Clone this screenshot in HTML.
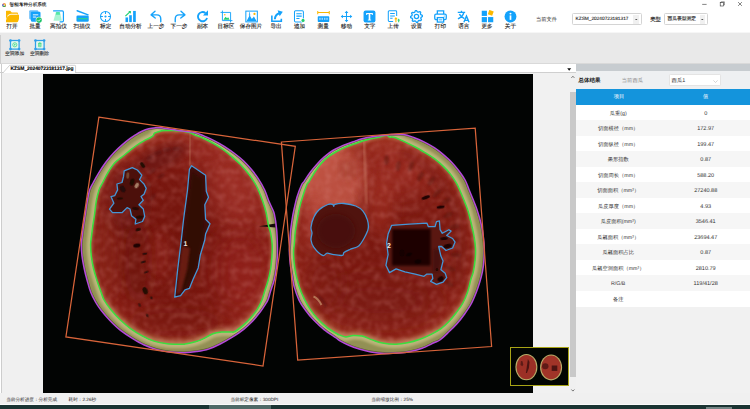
<!DOCTYPE html>
<html lang="zh"><head><meta charset="utf-8"><title>智能考种分析系统</title>
<style>
*{margin:0;padding:0;box-sizing:border-box}
html,body{width:750px;height:409px;overflow:hidden;background:#f0f0f0;text-rendering:geometricPrecision;font-family:"Liberation Sans",sans-serif;color:#222}
#app{position:relative;width:750px;height:409px;overflow:hidden;background:#f0f0f0}
.abs{position:absolute}
#title{left:0;top:0;width:750px;height:9.5px;background:#fff}
#title .t{position:absolute;left:9.6px;top:2.1px;font-size:4.62px;line-height:6px;color:#111;white-space:nowrap;-webkit-text-stroke:0.1px #111}
#toolbar{left:0;top:9.5px;width:750px;height:22.7px;background:#fff}
.tool{position:absolute;top:0.4px;width:30px;height:21px;text-align:center}
.tool svg{display:block;margin:0 auto}
.tool span{display:block;font-size:5.6px;line-height:7px;margin-top:1px;color:#222;-webkit-text-stroke:0.12px #222;white-space:nowrap;letter-spacing:0}
#band{left:0;top:32px;width:750px;height:31.6px;background:#e9e9e9;border-top:1px solid #f6f6f6;border-bottom:0.6px solid #d9d9d9}
.tool2{position:absolute;top:6.1px;width:30px;text-align:center}
.tool2 svg{display:block;margin:0 auto}
.tool2 span{display:block;font-size:4.8px;line-height:6px;margin-top:0.9px;color:#333;white-space:nowrap;-webkit-text-stroke:0.1px #333}
#tabrow{left:0;top:63.6px;width:575.8px;height:9.6px;background:#fff;border-bottom:0.5px solid #cfcfcf}
#tabtxt{position:absolute;left:10.6px;top:3.6px;font-size:4.95px;line-height:6px;font-weight:bold;color:#000;white-space:nowrap;letter-spacing:-0.05px;-webkit-text-stroke:0.1px #000}
#canvasleft{left:0;top:73.2px;width:42.6px;height:320.2px;background:#f0f0f0;border-left:0.5px solid #fff}
#canvasleft:before{content:"";position:absolute;left:0.4px;top:-9px;width:0.6px;height:330px;background:#cdcdcd}
#cv{left:42.6px;top:73.6px;width:490.4px;height:319.8px;background:#020403;overflow:hidden}
#gap{left:533px;top:73.2px;width:36.6px;height:320.2px;background:#f1f1f1}
#sb{left:569.8px;top:73.2px;width:6.2px;height:320.2px;background:#f0f0f0}
#sbthumb{left:569.8px;top:92.2px;width:6.2px;height:285.2px;background:#c9c9c9}
#rp{left:576px;top:63.6px;width:174px;height:330px;background:#f1f1f1}
#rpstrip{left:0;top:0;width:100%;height:7.4px;background:#c7ccd0}
#rphead{left:0;top:7.4px;width:100%;height:18.2px;background:#eef0f2}
#rpblue{left:0;top:25.5px;width:100%;height:15.5px;background:#1494dc;color:#fff;font-size:5.25px;line-height:15.5px}
#rpblue .c1,#rpblue .c2{top:0.7px;font-size:5.25px}
#rows{left:0;top:41px;width:100%}
.row{position:relative;height:15.546px;background:#fff;font-size:5.25px;line-height:15.546px;color:#333}
.row.alt{background:#f6f6f6}
.c1,.c2{position:absolute;top:2px;text-align:center;white-space:nowrap}
.c1{left:0;width:86px}
.row .c1{left:-0.8px}
.c2{left:86px;width:87.4px;font-size:5.55px}
#status{left:0;top:393.4px;width:750px;height:11px;background:#f0f0f0;font-size:4.64px;line-height:6px;color:#1a1a1a}
#status span{position:absolute;top:3.6px;white-space:nowrap}
#taskbar{left:0;top:404.3px;width:750px;height:4.7px;background:#1b3433;border-top:1.2px solid #fbfbfb}
.combo{position:absolute;top:13px;height:12.2px;background:#fff;border:0.6px solid #d4d4d4;border-radius:1.4px;font-size:4.75px;line-height:11.6px;-webkit-text-stroke:0.1px #222;color:#222;white-space:nowrap}
.combo .btn{position:absolute;right:1.6px;top:1.2px;width:5.6px;height:8.8px;background:#f0f0f0}

</style></head><body><div id="app">
<div id="title" class="abs"><svg class="abs" style="left:2px;top:2.6px" width="4.3" height="4.3" viewBox="0 0 6 6"><circle cx="3" cy="3" r="2.6" fill="#e8483a"/><path d="M3,3 L3,0.4 A2.6,2.6 0 0 1 5.4,4Z" fill="#f2c230"/><path d="M3,3 L5.4,4 A2.6,2.6 0 0 1 1,4.8Z" fill="#37b24d"/><path d="M3,3 L1,4.8 A2.6,2.6 0 0 1 1,1.4Z" fill="#3b7de0"/><circle cx="3" cy="3" r="1" fill="#fff"/></svg><span class="t">智能考种分析系统</span>
<svg class="abs" style="left:700px;top:0" width="50" height="9" viewBox="0 0 50 9"><path d="M2.2,4.4H6.6" stroke="#333" stroke-width="0.6"/><rect x="20.2" y="2.6" width="3.4" height="3.4" fill="none" stroke="#333" stroke-width="0.6"/><path d="M21.2,2.6V1.8H24.4V5H23.6" fill="none" stroke="#333" stroke-width="0.5"/><path d="M38.1,2.1L41.9,5.9M41.9,2.1L38.1,5.9" stroke="#333" stroke-width="0.6"/></svg>
</div>
<div id="toolbar" class="abs">
<div class="tool" style="left:-3.0px"><svg width="13" height="13" viewBox="0 0 14 14"><g transform="translate(-1.2,-0.2) scale(1.09,1.04)"><path d="M0.5,2.2 Q0.5,1 1.7,1 H5.2 L6.8,2.8 H12 Q13,2.8 13,3.8 V5 H3 L0.5,11.5Z" fill="#fbb800"/><path d="M3.2,5.2 H14.6 Q15.4,5.2 15.1,6 L13,12.2 Q12.7,13 11.8,13 H1.2 Q0.3,13 0.6,12.2Z" fill="#fbb800"/><path d="M3.3,6.6 Q3.8,4.6 6,4.6 H12.5" fill="none" stroke="#fff" stroke-width="0.9"/></g></svg><span>打开</span></div>
<div class="tool" style="left:20.0px"><svg width="13" height="13" viewBox="0 0 14 14"><rect x="0.2" y="0.2" width="9.8" height="10" rx="1.2" fill="#6cc0fb"/><rect x="2" y="2" width="10.4" height="10.6" rx="1.2" fill="#14a2fb"/><path d="M4.2,5.2H10M4.2,7.6H7.6" stroke="#fff" stroke-width="1"/><circle cx="10.8" cy="10.9" r="3.6" fill="#fff"/><circle cx="10.8" cy="10.9" r="3" fill="#1fc46a"/><path d="M9.3,10.9l1.1,1.1l2,-2.1" stroke="#fff" stroke-width="0.8" fill="none"/></svg><span>批量</span></div>
<div class="tool" style="left:43.5px"><svg width="13" height="13" viewBox="0 0 14 14"><path d="M1.2,1 H11 Q12.3,1 12.3,2.3 V11.7 Q12.3,12.8 11,12.8 H8.2" fill="none" stroke="#14a2fb" stroke-width="1.3"/><path d="M4.2,2.2 H8.6 L10.6,11.6 H1.6Z" fill="#8ef0c4" opacity="0.75"/><path d="M4.6,2.2H8.2L8.8,5H4Z" fill="#3fe39a" opacity="0.8"/></svg><span>高拍仪</span></div>
<div class="tool" style="left:67.0px"><svg width="13" height="13" viewBox="0 0 14 14"><path d="M1.2,0.8 L13,5.2" stroke="#14a2fb" stroke-width="1.5" stroke-linecap="round"/><rect x="0.5" y="6" width="13.2" height="6.7" rx="1.4" fill="#14a2fb"/><path d="M2.4,9.4H12" stroke="#31e07a" stroke-width="1.3" stroke-linecap="round"/></svg><span>扫描仪</span></div>
<div class="tool" style="left:90.7px"><svg width="13" height="13" viewBox="0 0 14 14"><circle cx="7" cy="7" r="5.4" fill="none" stroke="#14a2fb" stroke-width="1.1"/><circle cx="7" cy="7" r="1.2" fill="#14a2fb"/><path d="M7,1.6V4.2M7,9.8V12.4M1.6,7H4.2M9.8,7H12.4" stroke="#14a2fb" stroke-width="1.1"/></svg><span>标定</span></div>
<div class="tool" style="left:115.5px"><svg width="13" height="13" viewBox="0 0 14 14"><rect x="1.6" y="8" width="2.8" height="5" fill="#14a2fb"/><rect x="5.6" y="5.6" width="2.8" height="7.4" fill="#14a2fb"/><rect x="9.8" y="1" width="2.9" height="12" fill="#14a2fb"/><path d="M1.5,6.6 L6.6,1.8" stroke="#1fd071" stroke-width="1.3"/><path d="M4.6,1.2H7.4V4Z" fill="#1fd071"/></svg><span>自动分析</span></div>
<div class="tool" style="left:141.0px"><svg width="13" height="13" viewBox="0 0 14 14"><path d="M1.2,5.2 L5.4,1.3 M1.2,5.2 L5.6,8.6 M1.6,5.2 H7.4 Q11.6,5.2 11.6,9.6 V12.6" fill="none" stroke="#14a2fb" stroke-width="1.5" stroke-linecap="round" stroke-linejoin="round"/></svg><span>上一步</span></div>
<div class="tool" style="left:164.0px"><svg width="13" height="13" viewBox="0 0 14 14"><path d="M12.8,5.2 L8.6,1.3 M12.8,5.2 L8.4,8.6 M12.4,5.2 H6.6 Q2.4,5.2 2.4,9.6 V12.6" fill="none" stroke="#14a2fb" stroke-width="1.5" stroke-linecap="round" stroke-linejoin="round"/></svg><span>下一步</span></div>
<div class="tool" style="left:187.6px"><svg width="13" height="13" viewBox="0 0 14 14"><path d="M11.9,8.6 A5,5 0 1 1 10.2,3.2" fill="none" stroke="#14a2fb" stroke-width="2"/><path d="M12.9,0.4 V5.8 H7.5Z" fill="#14a2fb"/></svg><span>副本</span></div>
<div class="tool" style="left:211.0px"><svg width="13" height="13" viewBox="0 0 14 14"><path d="M2.6,0.6V11.4H13.4M0.6,2.6H11.4V13.4" fill="none" stroke="#14a2fb" stroke-width="1"/><path d="M3.6,10.4 L6,7.2 L7.6,9 L8.8,7.8 L10.4,10.4Z" fill="#22cf6e"/><circle cx="5.2" cy="5.2" r="0.8" fill="#fbb800"/></svg><span>目标区</span></div>
<div class="tool" style="left:236.0px"><svg width="13" height="13" viewBox="0 0 14 14"><rect x="0.9" y="1.2" width="12.4" height="11.6" fill="#fff" stroke="#14a2fb" stroke-width="1.1"/><path d="M1.6,12.2 L5,5.6 L7.4,9.6 L9.6,7 L12.6,12.2Z" fill="#14a2fb"/><circle cx="10.2" cy="4.2" r="1.2" fill="#fbb800"/><path d="M4.6,2.4 V5 L3.8,5 L5,6.4 L6.2,5 L5.4,5 V2.4Z" fill="#14a2fb"/></svg><span>保存图片</span></div>
<div class="tool" style="left:261.0px"><svg width="13" height="13" viewBox="0 0 14 14"><path d="M2,5.8 V12.2 H12.2 V9.4" fill="none" stroke="#14a2fb" stroke-width="1.7"/><path d="M5.2,10 Q5.6,5 10,3.6" fill="none" stroke="#14a2fb" stroke-width="2.2"/><path d="M8.2,0.4 L13.8,2 L10.4,6.6Z" fill="#14a2fb"/></svg><span>导出</span></div>
<div class="tool" style="left:284.6px"><svg width="13" height="13" viewBox="0 0 14 14"><rect x="1.6" y="0.9" width="9.6" height="12" rx="1.2" fill="#fff" stroke="#14a2fb" stroke-width="1.1"/><path d="M3.6,4H9.4M3.6,6.6H9.4M3.6,9.2H7" stroke="#14a2fb" stroke-width="1.1"/><circle cx="10.8" cy="11.2" r="2.4" fill="#fff"/><circle cx="10.8" cy="11.2" r="1.7" fill="#22cf6e"/></svg><span>追加</span></div>
<div class="tool" style="left:308.2px"><svg width="13" height="13" viewBox="0 0 14 14"><path d="M0.8,1V4.6M13.2,1V4.6M0.8,2.8H13.2" stroke="#fbb800" stroke-width="1.1"/><rect x="0.8" y="6.8" width="12.4" height="6" rx="0.8" fill="#14a2fb"/><path d="M3.2,8.4V10.6M5.6,8.4V10.6M8.4,8.4V10.6M10.8,8.4V10.6" stroke="#fff" stroke-width="0.9"/></svg><span>测量</span></div>
<div class="tool" style="left:331.6px"><svg width="13" height="13" viewBox="0 0 14 14"><g transform="translate(0.6,0.6) scale(0.915)"><path d="M7,1.4V12.6M1.4,7H12.6" stroke="#14a2fb" stroke-width="1.2"/><path d="M7,0.2L9.2,2.8H4.8ZM7,13.8L9.2,11.2H4.8ZM0.2,7L2.8,4.8V9.2ZM13.8,7L11.2,4.8V9.2Z" fill="#14a2fb"/></g></svg><span>移动</span></div>
<div class="tool" style="left:354.8px"><svg width="13" height="13" viewBox="0 0 14 14"><rect x="0.6" y="0.6" width="12.8" height="12.8" rx="2.2" fill="#14a2fb"/><path d="M3.4,3.2H10.6V5.4H9.8Q9.6,4.2 8.6,4.2H7.9V10Q7.9,10.6 8.8,10.6V11.2H5.2V10.6Q6.1,10.6 6.1,10V4.2H5.4Q4.4,4.2 4.2,5.4H3.4Z" fill="#fff"/></svg><span>文字</span></div>
<div class="tool" style="left:378.2px"><svg width="13" height="13" viewBox="0 0 14 14"><path d="M10.4,6.4V1.8Q10.4,0.9 9.4,0.9H2.4Q1.4,0.9 1.4,1.8V11.4Q1.4,12.4 2.4,12.4H6.6" fill="none" stroke="#14a2fb" stroke-width="1.1"/><path d="M3.4,3.8H8.4M3.4,6.4H8.4M3.4,9H6" stroke="#14a2fb" stroke-width="1.1"/><path d="M9.6,13.2V9.2" stroke="#fbb800" stroke-width="1.2"/><path d="M9.6,7.6L11.4,10H7.8Z" fill="#fbb800"/><path d="M12.6,13.2V10.8" stroke="#22cf6e" stroke-width="1.1"/><path d="M12.6,9.2L14,11.2H11.2Z" fill="#22cf6e"/></svg><span>上传</span></div>
<div class="tool" style="left:401.6px"><svg width="13" height="13" viewBox="0 0 14 14"><path d="M13.28,5.75L13.40,7.00L11.90,7.98L11.62,8.91L12.32,10.56L11.53,11.53L9.78,11.16L8.91,11.62L8.25,13.28L7.00,13.40L6.02,11.90L5.09,11.62L3.44,12.32L2.47,11.53L2.84,9.78L2.38,8.91L0.72,8.25L0.60,7.00L2.10,6.02L2.38,5.09L1.68,3.44L2.47,2.47L4.22,2.84L5.09,2.38L5.75,0.72L7.00,0.60L7.98,2.10L8.91,2.38L10.56,1.68L11.53,2.47L11.16,4.22L11.62,5.09Z" fill="none" stroke="#14a2fb" stroke-width="1.4" stroke-linejoin="round"/><circle cx="7" cy="7" r="2.3" fill="none" stroke="#14a2fb" stroke-width="1.4"/></svg><span>设置</span></div>
<div class="tool" style="left:425.4px"><svg width="13" height="13" viewBox="0 0 14 14"><path d="M3.6,4.4V1H10.4V4.4" fill="none" stroke="#14a2fb" stroke-width="1.4"/><rect x="0.8" y="4.4" width="12.4" height="6" rx="1.4" fill="none" stroke="#14a2fb" stroke-width="1.4"/><rect x="3.6" y="8.2" width="6.8" height="4.8" fill="#fff" stroke="#14a2fb" stroke-width="1.4"/><path d="M5,10.6H9" stroke="#14a2fb" stroke-width="0.9"/><circle cx="11" cy="6.4" r="0.6" fill="#14a2fb"/></svg><span>打印</span></div>
<div class="tool" style="left:448.8px"><svg width="13" height="13" viewBox="0 0 14 14"><path d="M0.8,2.6H8.8M4.8,0.8V2.6M7.4,2.6Q6.4,7.2 1,9.6M2.6,4.4Q4,7.4 8,9.4" fill="none" stroke="#14a2fb" stroke-width="1.5"/><path d="M7.4,13.2L10.2,6.6L13,13.2M8.3,11.2H12.1" fill="none" stroke="#14a2fb" stroke-width="1.5"/></svg><span>语言</span></div>
<div class="tool" style="left:472.0px"><svg width="13" height="13" viewBox="0 0 14 14"><rect x="0.8" y="0.8" width="5.6" height="5.6" fill="#14a2fb"/><rect x="0.8" y="7.6" width="5.6" height="5.6" fill="#14a2fb"/><rect x="7.6" y="7.6" width="5.6" height="5.6" fill="#14a2fb"/><rect x="8" y="0.6" width="5" height="5" fill="#fbb800" transform="rotate(20 10.5 3.1)"/></svg><span>更多</span></div>
<div class="tool" style="left:495.4px"><svg width="13" height="13" viewBox="0 0 14 14"><circle cx="7" cy="7" r="6.4" fill="#14a2fb"/><circle cx="7" cy="3.9" r="1.05" fill="#fff"/><rect x="6.1" y="5.8" width="1.8" height="4.8" fill="#fff"/></svg><span>关于</span></div>

<span class="abs" style="left:535.9px;top:7.2px;font-size:5.25px;line-height:6px;color:#1a1a1a;white-space:nowrap">当前文件</span>
<div class="combo" style="left:572px;top:3.5px;width:69.6px"><span style="margin-left:2.6px">KZSM_20240723181317</span><span class="btn"><svg style="position:absolute;left:1.5px;top:3.4px" width="2.6" height="1.9" viewBox="0 0 3.4 2.4"><path d="M0.2,0.2H3.2L1.7,2.2Z" fill="#222"/></svg></span></div>
<span class="abs" style="left:650.2px;top:7.6px;font-size:5.3px;line-height:6px;color:#111;white-space:nowrap;-webkit-text-stroke:0.12px #111">类型</span>
<div class="combo" style="left:664.4px;top:3.5px;width:43.4px"><span style="margin-left:2px">西瓜表型测定</span><span class="btn"><svg style="position:absolute;left:1.5px;top:3.4px" width="2.6" height="1.9" viewBox="0 0 3.4 2.4"><path d="M0.2,0.2H3.2L1.7,2.2Z" fill="#222"/></svg></span></div>
</div>
<div id="band" class="abs"><div class="abs" style="left:0;top:2px;width:1.2px;height:30px;background:#cfcfcf"></div>
<div class="tool2" style="left:-0.4px"><svg width="11.6" height="11.6" viewBox="0 0 14 14" style="position:relative;left:0.6px"><rect x="1.8" y="1.8" width="10.4" height="10.4" fill="#e2f6ec" stroke="#2f9fea" stroke-width="1.5"/><circle cx="7" cy="7" r="2.5" fill="none" stroke="#35d681" stroke-width="0.9"/><path d="M6.3,5.7V8.3L8.4,7Z" fill="#35d681"/><circle cx="1.8" cy="1.8" r="1.6" fill="#2f9fea"/><circle cx="12.2" cy="1.8" r="1.6" fill="#2f9fea"/><circle cx="1.8" cy="12.2" r="1.6" fill="#2f9fea"/><circle cx="12.2" cy="12.2" r="1.6" fill="#2f9fea"/></svg><span>空洞添加</span></div>
<div class="tool2" style="left:24.5px"><svg width="11.6" height="11.6" viewBox="0 0 14 14" style="position:relative;left:0.6px"><rect x="1.8" y="1.8" width="10.4" height="10.4" fill="#e2f6ec" stroke="#2f9fea" stroke-width="1.5"/><path d="M5.5,5.3H8.5V9.3H5.5ZM5,5.3H9M6.3,4.5H7.7M6.5,6.4V8.3M7.5,6.4V8.3" fill="none" stroke="#35d681" stroke-width="0.8"/><circle cx="1.8" cy="1.8" r="1.6" fill="#2f9fea"/><circle cx="12.2" cy="1.8" r="1.6" fill="#2f9fea"/><circle cx="1.8" cy="12.2" r="1.6" fill="#2f9fea"/><circle cx="12.2" cy="12.2" r="1.6" fill="#2f9fea"/></svg><span>空洞删除</span></div>
</div>
<div id="tabrow" class="abs"><svg class="abs" style="left:0;top:0" width="80" height="9.6" viewBox="0 0 80 9.6"><path d="M0,9.3 H2.6 L9.6,1.3 H74.8 Q75.6,1.3 75.6,2.1 V9.3" fill="#fff" stroke="#b4b4b4" stroke-width="0.6"/></svg><span id="tabtxt">KZSM_20240723181317.jpg</span>
<svg class="abs" style="left:567.4px;top:4.4px" width="4.4" height="3" viewBox="0 0 4.4 3"><path d="M0.2,0.3H4.2L2.2,2.7Z" fill="#111"/></svg></div>
<div id="canvasleft" class="abs"></div>
<div id="cv" class="abs"><svg class="abs" style="left:-42.6px;top:-73.6px" width="750" height="409" viewBox="0 0 750 409"><defs>
<radialGradient id="gL" gradientUnits="userSpaceOnUse" cx="182" cy="242" r="116">
<stop offset="0" stop-color="#74150d"/><stop offset="0.55" stop-color="#79170f"/><stop offset="0.8" stop-color="#8a2016"/><stop offset="0.93" stop-color="#982c1d"/><stop offset="1" stop-color="#a24428"/></radialGradient>
<radialGradient id="gR" gradientUnits="userSpaceOnUse" cx="385" cy="246" r="112">
<stop offset="0" stop-color="#7a1810"/><stop offset="0.55" stop-color="#7d1a11"/><stop offset="0.8" stop-color="#8c2217"/><stop offset="0.93" stop-color="#9a2e1e"/><stop offset="1" stop-color="#a24428"/></radialGradient>
<filter id="b2" x="-30%" y="-30%" width="160%" height="160%"><feGaussianBlur stdDeviation="2"/></filter>
<filter id="b4" x="-30%" y="-30%" width="160%" height="160%"><feGaussianBlur stdDeviation="4"/></filter>
<filter id="b7" x="-40%" y="-40%" width="180%" height="180%"><feGaussianBlur stdDeviation="7"/></filter>
<filter id="b12" x="-50%" y="-50%" width="200%" height="200%"><feGaussianBlur stdDeviation="12"/></filter>
<filter id="b1" x="-30%" y="-30%" width="160%" height="160%"><feGaussianBlur stdDeviation="0.8"/></filter>
<filter id="b05" x="-30%" y="-30%" width="160%" height="160%"><feGaussianBlur stdDeviation="0.5"/></filter>
<filter id="nz" x="0" y="0" width="100%" height="100%"><feTurbulence type="fractalNoise" baseFrequency="0.16 0.16" numOctaves="4" seed="11" result="n"/><feColorMatrix in="n" type="matrix" values="0 0 0 0 0.8  0 0 0 0 0.36  0 0 0 0 0.34  1.5 0 0 0 -0.62"/><feGaussianBlur stdDeviation="1.1"/></filter>
<clipPath id="cL"><path d="M90.6,245.0C90.6,241.7 91.0,240.2 91.4,236.9C91.8,233.6 92.4,229.1 92.9,225.2C93.5,221.3 94.2,217.4 94.7,213.5C95.2,209.6 95.5,205.6 96.2,201.7C96.9,197.8 98.0,193.1 99.0,190.0C100.0,186.9 101.0,185.9 102.5,183.0C104.0,180.1 106.0,175.8 108.0,172.5C110.0,169.2 112.1,165.8 114.6,163.0C117.1,160.2 120.7,158.0 123.2,156.0C125.7,154.0 127.2,152.6 129.4,150.8C131.6,149.1 134.1,147.1 136.4,145.5C138.8,143.9 141.3,142.3 143.5,141.1C145.7,139.8 148.0,138.9 149.6,138.0C151.2,137.1 152.3,136.6 153.1,135.8C153.9,135.0 153.5,133.9 154.5,133.2C155.5,132.5 157.6,131.8 159.3,131.4C161.0,131.0 162.6,130.8 164.6,130.6C166.6,130.4 169.7,130.4 171.6,130.4C173.5,130.4 174.3,130.6 176.0,130.7C177.7,130.8 179.2,130.4 181.6,130.8C184.0,131.2 188.2,132.2 190.4,132.9C192.6,133.6 192.8,134.2 195.0,135.1C197.2,136.0 200.6,137.0 203.8,138.5C207.0,140.0 210.7,141.9 214.1,143.9C217.5,145.9 221.1,148.2 224.3,150.5C227.5,152.8 230.2,155.0 233.1,157.6C236.0,160.2 239.2,163.1 241.9,165.9C244.6,168.8 247.1,171.8 249.3,174.7C251.5,177.6 253.6,180.9 255.1,183.5C256.6,186.1 257.2,187.2 258.4,190.0C259.6,192.8 261.0,196.3 262.3,200.0C263.6,203.7 265.0,207.8 266.0,212.0C267.0,216.2 267.6,221.4 268.4,225.0C269.2,228.6 270.1,230.1 270.7,233.4C271.3,236.7 272.0,241.1 272.2,245.0C272.4,248.9 272.1,252.8 271.9,256.7C271.6,260.6 271.3,264.6 270.7,268.5C270.1,272.4 269.2,276.3 268.2,280.2C267.2,284.1 265.5,288.6 264.5,291.9C263.5,295.2 263.1,297.2 262.0,300.0C260.9,302.8 259.4,305.9 257.6,308.8C255.8,311.7 253.3,314.9 251.0,317.6C248.7,320.3 246.4,322.6 243.7,324.9C241.0,327.2 237.1,330.3 234.9,331.5C232.7,332.7 232.7,331.9 230.5,332.0C228.3,332.1 224.6,331.7 221.7,332.0C218.8,332.3 215.8,332.6 212.9,333.7C210.0,334.8 207.0,337.0 204.1,338.4C201.2,339.8 198.5,340.9 195.3,341.8C192.1,342.7 187.5,343.6 185.0,344.0C182.5,344.4 183.3,344.4 180.3,344.3C177.3,344.2 171.5,344.2 167.1,343.7C162.7,343.2 158.1,342.4 153.9,341.1C149.8,339.8 146.1,338.0 142.2,335.9C138.3,333.8 134.2,331.3 130.5,328.6C126.8,325.9 123.4,322.9 120.2,319.8C117.0,316.8 114.1,313.6 111.4,310.3C108.7,307.0 105.8,303.1 104.1,300.0C102.4,296.9 102.2,295.2 101.0,291.9C99.8,288.6 98.2,284.1 96.9,280.2C95.7,276.3 94.4,272.4 93.5,268.5C92.6,264.6 91.9,260.6 91.4,256.7C90.9,252.8 90.6,248.3 90.6,245.0Z"/></clipPath>
<clipPath id="cR"><path d="M294.2,245.0C294.5,241.7 294.7,236.0 295.2,231.9C295.7,227.8 296.4,224.1 297.1,220.2C297.8,216.3 298.4,212.4 299.3,208.5C300.2,204.6 301.4,200.6 302.6,196.7C303.8,192.8 305.6,187.6 306.7,185.0C307.8,182.4 308.0,183.4 309.3,181.3C310.6,179.2 312.7,175.3 314.5,172.5C316.3,169.7 318.2,166.9 320.3,164.5C322.4,162.1 324.3,160.0 326.9,157.9C329.5,155.8 332.8,153.7 335.7,152.0C338.6,150.3 341.1,149.1 344.5,147.6C347.9,146.1 352.4,144.5 356.3,143.2C360.2,141.8 364.1,140.5 368.0,139.5C371.9,138.5 376.6,137.8 379.7,137.0C382.8,136.2 385.0,135.0 386.6,135.0C388.2,135.0 388.1,136.6 389.5,137.0C390.9,137.4 392.1,136.7 394.7,137.5C397.3,138.3 401.5,140.3 404.9,141.9C408.3,143.5 411.8,145.2 415.2,147.0C418.6,148.8 422.3,151.0 425.5,152.9C428.7,154.8 431.4,156.5 434.3,158.7C437.2,160.9 440.4,163.5 443.1,166.1C445.8,168.7 448.2,171.3 450.4,174.1C452.6,176.9 454.8,180.2 456.3,182.9C457.9,185.6 457.9,185.7 459.7,190.0C461.5,194.3 465.3,202.9 467.3,208.7C469.3,214.5 470.5,220.3 471.6,225.0C472.7,229.7 473.5,232.8 474.1,236.7C474.8,240.6 475.3,244.6 475.5,248.5C475.7,252.4 475.5,256.3 475.1,260.2C474.7,264.1 474.0,268.6 473.3,271.9C472.6,275.2 471.6,276.7 470.7,280.0C469.8,283.3 469.0,287.8 467.7,291.7C466.4,295.6 464.6,299.9 462.6,303.5C460.7,307.1 458.3,309.9 456.0,313.0C453.7,316.1 451.1,319.2 448.7,321.8C446.2,324.4 444.2,326.3 441.3,328.4C438.4,330.5 434.8,332.4 431.1,334.3C427.4,336.2 423.1,338.1 419.2,339.5C415.3,340.9 411.4,342.0 407.5,342.8C403.6,343.6 399.9,344.2 395.7,344.3C391.5,344.4 386.4,343.8 382.5,343.1C378.6,342.4 375.7,341.1 372.3,339.9C368.9,338.7 365.2,336.8 362.0,336.1C358.8,335.4 355.9,335.4 353.2,335.5C350.5,335.6 348.1,337.1 345.9,337.0C343.7,336.9 341.4,335.6 340.0,335.1C338.6,334.6 339.4,335.3 337.2,334.0C335.0,332.7 330.2,330.0 326.9,327.4C323.6,324.8 320.2,321.7 317.4,318.6C314.6,315.6 312.3,312.4 310.1,309.1C307.9,305.8 306.0,302.5 304.2,298.8C302.4,295.1 300.6,290.8 299.3,286.9C298.0,283.0 297.0,279.1 296.1,275.2C295.2,271.3 294.6,267.4 294.2,263.5C293.8,259.6 293.5,254.8 293.5,251.7C293.5,248.6 293.9,248.3 294.2,245.0Z"/></clipPath>
<linearGradient id="lgB" gradientUnits="userSpaceOnUse" x1="0" y1="285" x2="0" y2="335"><stop offset="0" stop-color="#000"/><stop offset="1" stop-color="#fff"/></linearGradient><mask id="mBot" maskUnits="userSpaceOnUse" x="60" y="100" width="450" height="280"><rect x="60" y="100" width="450" height="280" fill="url(#lgB)"/></mask><clipPath id="cLo"><path d="M81.3,245.0C81.3,241.7 81.7,240.2 82.1,236.9C82.5,233.6 83.0,229.1 83.6,225.2C84.1,221.3 84.8,217.4 85.4,213.5C86.0,209.6 86.5,205.6 87.2,201.7C87.9,197.8 88.6,193.2 89.6,190.0C90.6,186.8 91.8,185.3 93.3,182.5C94.8,179.7 96.5,176.5 98.6,173.1C100.7,169.7 103.3,165.7 105.8,162.3C108.3,158.9 111.0,155.8 113.8,152.8C116.6,149.9 119.6,147.0 122.4,144.6C125.2,142.2 128.2,139.9 130.5,138.2C132.8,136.5 134.1,135.8 136.0,134.6C137.9,133.4 139.9,132.3 142.0,131.3C144.1,130.3 146.4,129.4 148.7,128.8C151.0,128.2 153.5,127.9 155.8,127.7C158.2,127.5 160.3,127.7 162.8,127.9C165.3,128.2 168.3,128.8 171.0,129.2C173.7,129.6 176.0,130.0 178.7,130.4C181.4,130.8 184.3,131.1 187.0,131.5C189.7,131.9 192.2,131.9 195.0,132.6C197.8,133.3 200.6,134.6 203.8,135.9C207.0,137.2 210.7,138.8 214.1,140.6C217.5,142.3 220.9,144.2 224.3,146.4C227.7,148.6 231.4,151.1 234.6,153.5C237.8,155.9 240.6,158.1 243.4,160.8C246.2,163.5 249.1,166.7 251.5,169.6C253.9,172.5 255.9,175.0 258.1,178.4C260.3,181.8 263.0,186.4 264.7,190.0C266.4,193.6 267.2,197.0 268.4,200.0C269.6,203.0 271.0,205.6 272.0,208.0C273.0,210.4 273.6,210.8 274.4,214.3C275.2,217.8 276.1,223.9 276.6,229.0C277.1,234.1 277.3,240.4 277.4,245.0C277.5,249.6 277.5,252.8 277.3,256.7C277.1,260.6 276.8,264.6 276.3,268.5C275.8,272.4 275.1,276.3 274.1,280.2C273.1,284.1 271.4,288.6 270.4,291.9C269.4,295.2 268.8,297.8 267.9,300.0C267.0,302.2 266.2,303.0 264.9,305.1C263.5,307.2 261.9,309.8 259.8,312.5C257.7,315.2 255.2,318.5 252.5,321.3C249.8,324.1 247.1,326.6 243.7,329.3C240.3,332.0 235.8,334.9 231.9,337.4C228.0,339.8 224.1,342.1 220.2,344.0C216.3,345.9 212.4,347.8 208.5,349.1C204.6,350.4 200.6,351.0 196.7,351.6C192.8,352.2 189.4,352.7 185.0,352.8C180.6,352.9 174.8,352.6 170.1,352.1C165.4,351.6 161.3,350.8 156.9,349.6C152.5,348.4 147.9,346.6 143.7,344.7C139.5,342.8 135.8,340.5 131.9,338.1C128.0,335.7 123.9,333.0 120.2,330.1C116.5,327.2 113.1,323.8 109.9,320.5C106.7,317.2 103.5,313.4 101.1,310.3C98.7,307.2 97.2,305.1 95.5,302.0C93.8,298.9 92.0,295.5 90.6,291.9C89.2,288.3 88.2,284.1 87.1,280.2C86.0,276.3 85.0,272.4 84.2,268.5C83.4,264.6 82.6,260.6 82.1,256.7C81.6,252.8 81.3,248.3 81.3,245.0Z"/></clipPath>
<clipPath id="cRo"><path d="M289.8,245.0C290.0,241.7 290.1,236.0 290.5,231.9C290.9,227.8 291.4,224.1 292.0,220.2C292.6,216.3 293.3,212.4 294.2,208.5C295.1,204.6 295.9,200.6 297.1,196.7C298.3,192.8 300.3,187.6 301.5,185.0C302.7,182.4 302.8,183.4 304.2,181.3C305.6,179.2 308.0,175.3 310.1,172.5C312.2,169.7 314.4,167.1 316.7,164.5C319.0,161.9 321.3,159.4 324.0,157.1C326.7,154.8 329.6,152.4 332.8,150.5C336.0,148.6 339.7,146.9 343.1,145.4C346.5,143.9 350.1,142.8 353.3,141.7C356.5,140.6 358.7,139.7 362.1,138.8C365.5,138.0 370.0,137.2 373.9,136.6C377.8,136.0 382.6,135.4 385.6,135.1C388.6,134.8 388.7,134.6 391.7,134.5C394.7,134.4 399.8,134.0 403.5,134.5C407.2,135.0 410.3,136.3 413.7,137.5C417.1,138.7 420.6,140.2 424.0,141.9C427.4,143.6 431.1,145.6 434.3,147.7C437.5,149.8 440.2,151.9 443.1,154.3C446.0,156.8 449.2,159.6 451.9,162.4C454.6,165.2 457.0,168.3 459.2,171.2C461.4,174.1 463.4,176.9 465.1,180.0C466.8,183.1 467.3,185.2 469.2,190.0C471.1,194.8 474.7,202.9 476.7,208.7C478.7,214.5 480.3,220.3 481.4,225.0C482.5,229.7 482.8,232.8 483.3,236.7C483.8,240.6 484.2,244.6 484.3,248.5C484.4,252.4 484.2,256.3 483.9,260.2C483.6,264.1 483.1,268.3 482.4,271.9C481.7,275.5 480.8,278.7 479.8,282.0C478.8,285.3 477.9,288.1 476.5,291.7C475.1,295.3 473.3,299.8 471.4,303.5C469.4,307.2 467.2,310.3 464.8,313.7C462.4,317.1 459.5,320.8 456.7,324.0C453.9,327.2 450.7,330.1 447.9,332.8C445.1,335.5 442.2,338.3 439.9,340.0C437.6,341.7 436.9,341.4 433.9,342.8C430.9,344.2 426.0,346.8 422.1,348.3C418.2,349.8 414.3,350.8 410.4,351.6C406.5,352.4 403.1,352.8 398.7,353.1C394.3,353.4 388.6,353.6 384.0,353.4C379.4,353.2 374.9,352.6 370.8,351.9C366.7,351.2 362.8,350.1 359.1,349.0C355.4,347.9 352.0,346.7 348.8,345.3C345.6,343.9 342.2,342.2 340.0,340.9C337.8,339.6 338.4,339.6 335.7,337.7C333.0,335.8 327.7,332.5 324.0,329.6C320.3,326.7 316.8,323.3 313.7,320.1C310.6,316.9 308.1,313.8 305.7,310.5C303.3,307.2 301.0,304.2 299.1,300.3C297.2,296.4 295.4,291.1 294.2,286.9C293.0,282.7 292.7,279.1 292.0,275.2C291.3,271.3 290.6,267.4 290.2,263.5C289.8,259.6 289.5,254.8 289.4,251.7C289.3,248.6 289.6,248.3 289.8,245.0Z"/></clipPath>
</defs><g clip-path="url(#cLo)"><path d="M81.3,245.0C81.3,241.7 81.7,240.2 82.1,236.9C82.5,233.6 83.0,229.1 83.6,225.2C84.1,221.3 84.8,217.4 85.4,213.5C86.0,209.6 86.5,205.6 87.2,201.7C87.9,197.8 88.6,193.2 89.6,190.0C90.6,186.8 91.8,185.3 93.3,182.5C94.8,179.7 96.5,176.5 98.6,173.1C100.7,169.7 103.3,165.7 105.8,162.3C108.3,158.9 111.0,155.8 113.8,152.8C116.6,149.9 119.6,147.0 122.4,144.6C125.2,142.2 128.2,139.9 130.5,138.2C132.8,136.5 134.1,135.8 136.0,134.6C137.9,133.4 139.9,132.3 142.0,131.3C144.1,130.3 146.4,129.4 148.7,128.8C151.0,128.2 153.5,127.9 155.8,127.7C158.2,127.5 160.3,127.7 162.8,127.9C165.3,128.2 168.3,128.8 171.0,129.2C173.7,129.6 176.0,130.0 178.7,130.4C181.4,130.8 184.3,131.1 187.0,131.5C189.7,131.9 192.2,131.9 195.0,132.6C197.8,133.3 200.6,134.6 203.8,135.9C207.0,137.2 210.7,138.8 214.1,140.6C217.5,142.3 220.9,144.2 224.3,146.4C227.7,148.6 231.4,151.1 234.6,153.5C237.8,155.9 240.6,158.1 243.4,160.8C246.2,163.5 249.1,166.7 251.5,169.6C253.9,172.5 255.9,175.0 258.1,178.4C260.3,181.8 263.0,186.4 264.7,190.0C266.4,193.6 267.2,197.0 268.4,200.0C269.6,203.0 271.0,205.6 272.0,208.0C273.0,210.4 273.6,210.8 274.4,214.3C275.2,217.8 276.1,223.9 276.6,229.0C277.1,234.1 277.3,240.4 277.4,245.0C277.5,249.6 277.5,252.8 277.3,256.7C277.1,260.6 276.8,264.6 276.3,268.5C275.8,272.4 275.1,276.3 274.1,280.2C273.1,284.1 271.4,288.6 270.4,291.9C269.4,295.2 268.8,297.8 267.9,300.0C267.0,302.2 266.2,303.0 264.9,305.1C263.5,307.2 261.9,309.8 259.8,312.5C257.7,315.2 255.2,318.5 252.5,321.3C249.8,324.1 247.1,326.6 243.7,329.3C240.3,332.0 235.8,334.9 231.9,337.4C228.0,339.8 224.1,342.1 220.2,344.0C216.3,345.9 212.4,347.8 208.5,349.1C204.6,350.4 200.6,351.0 196.7,351.6C192.8,352.2 189.4,352.7 185.0,352.8C180.6,352.9 174.8,352.6 170.1,352.1C165.4,351.6 161.3,350.8 156.9,349.6C152.5,348.4 147.9,346.6 143.7,344.7C139.5,342.8 135.8,340.5 131.9,338.1C128.0,335.7 123.9,333.0 120.2,330.1C116.5,327.2 113.1,323.8 109.9,320.5C106.7,317.2 103.5,313.4 101.1,310.3C98.7,307.2 97.2,305.1 95.5,302.0C93.8,298.9 92.0,295.5 90.6,291.9C89.2,288.3 88.2,284.1 87.1,280.2C86.0,276.3 85.0,272.4 84.2,268.5C83.4,264.6 82.6,260.6 82.1,256.7C81.6,252.8 81.3,248.3 81.3,245.0Z" fill="#929054"/><path d="M90.6,245.0C90.6,241.7 91.0,240.2 91.4,236.9C91.8,233.6 92.4,229.1 92.9,225.2C93.5,221.3 94.2,217.4 94.7,213.5C95.2,209.6 95.5,205.6 96.2,201.7C96.9,197.8 98.0,193.1 99.0,190.0C100.0,186.9 101.0,185.9 102.5,183.0C104.0,180.1 106.0,175.8 108.0,172.5C110.0,169.2 112.1,165.8 114.6,163.0C117.1,160.2 120.7,158.0 123.2,156.0C125.7,154.0 127.2,152.6 129.4,150.8C131.6,149.1 134.1,147.1 136.4,145.5C138.8,143.9 141.3,142.3 143.5,141.1C145.7,139.8 148.0,138.9 149.6,138.0C151.2,137.1 152.3,136.6 153.1,135.8C153.9,135.0 153.5,133.9 154.5,133.2C155.5,132.5 157.6,131.8 159.3,131.4C161.0,131.0 162.6,130.8 164.6,130.6C166.6,130.4 169.7,130.4 171.6,130.4C173.5,130.4 174.3,130.6 176.0,130.7C177.7,130.8 179.2,130.4 181.6,130.8C184.0,131.2 188.2,132.2 190.4,132.9C192.6,133.6 192.8,134.2 195.0,135.1C197.2,136.0 200.6,137.0 203.8,138.5C207.0,140.0 210.7,141.9 214.1,143.9C217.5,145.9 221.1,148.2 224.3,150.5C227.5,152.8 230.2,155.0 233.1,157.6C236.0,160.2 239.2,163.1 241.9,165.9C244.6,168.8 247.1,171.8 249.3,174.7C251.5,177.6 253.6,180.9 255.1,183.5C256.6,186.1 257.2,187.2 258.4,190.0C259.6,192.8 261.0,196.3 262.3,200.0C263.6,203.7 265.0,207.8 266.0,212.0C267.0,216.2 267.6,221.4 268.4,225.0C269.2,228.6 270.1,230.1 270.7,233.4C271.3,236.7 272.0,241.1 272.2,245.0C272.4,248.9 272.1,252.8 271.9,256.7C271.6,260.6 271.3,264.6 270.7,268.5C270.1,272.4 269.2,276.3 268.2,280.2C267.2,284.1 265.5,288.6 264.5,291.9C263.5,295.2 263.1,297.2 262.0,300.0C260.9,302.8 259.4,305.9 257.6,308.8C255.8,311.7 253.3,314.9 251.0,317.6C248.7,320.3 246.4,322.6 243.7,324.9C241.0,327.2 237.1,330.3 234.9,331.5C232.7,332.7 232.7,331.9 230.5,332.0C228.3,332.1 224.6,331.7 221.7,332.0C218.8,332.3 215.8,332.6 212.9,333.7C210.0,334.8 207.0,337.0 204.1,338.4C201.2,339.8 198.5,340.9 195.3,341.8C192.1,342.7 187.5,343.6 185.0,344.0C182.5,344.4 183.3,344.4 180.3,344.3C177.3,344.2 171.5,344.2 167.1,343.7C162.7,343.2 158.1,342.4 153.9,341.1C149.8,339.8 146.1,338.0 142.2,335.9C138.3,333.8 134.2,331.3 130.5,328.6C126.8,325.9 123.4,322.9 120.2,319.8C117.0,316.8 114.1,313.6 111.4,310.3C108.7,307.0 105.8,303.1 104.1,300.0C102.4,296.9 102.2,295.2 101.0,291.9C99.8,288.6 98.2,284.1 96.9,280.2C95.7,276.3 94.4,272.4 93.5,268.5C92.6,264.6 91.9,260.6 91.4,256.7C90.9,252.8 90.6,248.3 90.6,245.0Z" fill="none" stroke="#aaa468" stroke-width="9" filter="url(#b1)"/><path d="M90.6,245.0C90.6,241.7 91.0,240.2 91.4,236.9C91.8,233.6 92.4,229.1 92.9,225.2C93.5,221.3 94.2,217.4 94.7,213.5C95.2,209.6 95.5,205.6 96.2,201.7C96.9,197.8 98.0,193.1 99.0,190.0C100.0,186.9 101.0,185.9 102.5,183.0C104.0,180.1 106.0,175.8 108.0,172.5C110.0,169.2 112.1,165.8 114.6,163.0C117.1,160.2 120.7,158.0 123.2,156.0C125.7,154.0 127.2,152.6 129.4,150.8C131.6,149.1 134.1,147.1 136.4,145.5C138.8,143.9 141.3,142.3 143.5,141.1C145.7,139.8 148.0,138.9 149.6,138.0C151.2,137.1 152.3,136.6 153.1,135.8C153.9,135.0 153.5,133.9 154.5,133.2C155.5,132.5 157.6,131.8 159.3,131.4C161.0,131.0 162.6,130.8 164.6,130.6C166.6,130.4 169.7,130.4 171.6,130.4C173.5,130.4 174.3,130.6 176.0,130.7C177.7,130.8 179.2,130.4 181.6,130.8C184.0,131.2 188.2,132.2 190.4,132.9C192.6,133.6 192.8,134.2 195.0,135.1C197.2,136.0 200.6,137.0 203.8,138.5C207.0,140.0 210.7,141.9 214.1,143.9C217.5,145.9 221.1,148.2 224.3,150.5C227.5,152.8 230.2,155.0 233.1,157.6C236.0,160.2 239.2,163.1 241.9,165.9C244.6,168.8 247.1,171.8 249.3,174.7C251.5,177.6 253.6,180.9 255.1,183.5C256.6,186.1 257.2,187.2 258.4,190.0C259.6,192.8 261.0,196.3 262.3,200.0C263.6,203.7 265.0,207.8 266.0,212.0C267.0,216.2 267.6,221.4 268.4,225.0C269.2,228.6 270.1,230.1 270.7,233.4C271.3,236.7 272.0,241.1 272.2,245.0C272.4,248.9 272.1,252.8 271.9,256.7C271.6,260.6 271.3,264.6 270.7,268.5C270.1,272.4 269.2,276.3 268.2,280.2C267.2,284.1 265.5,288.6 264.5,291.9C263.5,295.2 263.1,297.2 262.0,300.0C260.9,302.8 259.4,305.9 257.6,308.8C255.8,311.7 253.3,314.9 251.0,317.6C248.7,320.3 246.4,322.6 243.7,324.9C241.0,327.2 237.1,330.3 234.9,331.5C232.7,332.7 232.7,331.9 230.5,332.0C228.3,332.1 224.6,331.7 221.7,332.0C218.8,332.3 215.8,332.6 212.9,333.7C210.0,334.8 207.0,337.0 204.1,338.4C201.2,339.8 198.5,340.9 195.3,341.8C192.1,342.7 187.5,343.6 185.0,344.0C182.5,344.4 183.3,344.4 180.3,344.3C177.3,344.2 171.5,344.2 167.1,343.7C162.7,343.2 158.1,342.4 153.9,341.1C149.8,339.8 146.1,338.0 142.2,335.9C138.3,333.8 134.2,331.3 130.5,328.6C126.8,325.9 123.4,322.9 120.2,319.8C117.0,316.8 114.1,313.6 111.4,310.3C108.7,307.0 105.8,303.1 104.1,300.0C102.4,296.9 102.2,295.2 101.0,291.9C99.8,288.6 98.2,284.1 96.9,280.2C95.7,276.3 94.4,272.4 93.5,268.5C92.6,264.6 91.9,260.6 91.4,256.7C90.9,252.8 90.6,248.3 90.6,245.0Z" fill="none" stroke="#bcb67c" stroke-width="6" filter="url(#b1)"/><path d="M81.3,245.0C81.3,241.7 81.7,240.2 82.1,236.9C82.5,233.6 83.0,229.1 83.6,225.2C84.1,221.3 84.8,217.4 85.4,213.5C86.0,209.6 86.5,205.6 87.2,201.7C87.9,197.8 88.6,193.2 89.6,190.0C90.6,186.8 91.8,185.3 93.3,182.5C94.8,179.7 96.5,176.5 98.6,173.1C100.7,169.7 103.3,165.7 105.8,162.3C108.3,158.9 111.0,155.8 113.8,152.8C116.6,149.9 119.6,147.0 122.4,144.6C125.2,142.2 128.2,139.9 130.5,138.2C132.8,136.5 134.1,135.8 136.0,134.6C137.9,133.4 139.9,132.3 142.0,131.3C144.1,130.3 146.4,129.4 148.7,128.8C151.0,128.2 153.5,127.9 155.8,127.7C158.2,127.5 160.3,127.7 162.8,127.9C165.3,128.2 168.3,128.8 171.0,129.2C173.7,129.6 176.0,130.0 178.7,130.4C181.4,130.8 184.3,131.1 187.0,131.5C189.7,131.9 192.2,131.9 195.0,132.6C197.8,133.3 200.6,134.6 203.8,135.9C207.0,137.2 210.7,138.8 214.1,140.6C217.5,142.3 220.9,144.2 224.3,146.4C227.7,148.6 231.4,151.1 234.6,153.5C237.8,155.9 240.6,158.1 243.4,160.8C246.2,163.5 249.1,166.7 251.5,169.6C253.9,172.5 255.9,175.0 258.1,178.4C260.3,181.8 263.0,186.4 264.7,190.0C266.4,193.6 267.2,197.0 268.4,200.0C269.6,203.0 271.0,205.6 272.0,208.0C273.0,210.4 273.6,210.8 274.4,214.3C275.2,217.8 276.1,223.9 276.6,229.0C277.1,234.1 277.3,240.4 277.4,245.0C277.5,249.6 277.5,252.8 277.3,256.7C277.1,260.6 276.8,264.6 276.3,268.5C275.8,272.4 275.1,276.3 274.1,280.2C273.1,284.1 271.4,288.6 270.4,291.9C269.4,295.2 268.8,297.8 267.9,300.0C267.0,302.2 266.2,303.0 264.9,305.1C263.5,307.2 261.9,309.8 259.8,312.5C257.7,315.2 255.2,318.5 252.5,321.3C249.8,324.1 247.1,326.6 243.7,329.3C240.3,332.0 235.8,334.9 231.9,337.4C228.0,339.8 224.1,342.1 220.2,344.0C216.3,345.9 212.4,347.8 208.5,349.1C204.6,350.4 200.6,351.0 196.7,351.6C192.8,352.2 189.4,352.7 185.0,352.8C180.6,352.9 174.8,352.6 170.1,352.1C165.4,351.6 161.3,350.8 156.9,349.6C152.5,348.4 147.9,346.6 143.7,344.7C139.5,342.8 135.8,340.5 131.9,338.1C128.0,335.7 123.9,333.0 120.2,330.1C116.5,327.2 113.1,323.8 109.9,320.5C106.7,317.2 103.5,313.4 101.1,310.3C98.7,307.2 97.2,305.1 95.5,302.0C93.8,298.9 92.0,295.5 90.6,291.9C89.2,288.3 88.2,284.1 87.1,280.2C86.0,276.3 85.0,272.4 84.2,268.5C83.4,264.6 82.6,260.6 82.1,256.7C81.6,252.8 81.3,248.3 81.3,245.0Z" fill="none" stroke="#5c622a" stroke-width="2.6" filter="url(#b05)"/></g><g clip-path="url(#cRo)"><path d="M289.8,245.0C290.0,241.7 290.1,236.0 290.5,231.9C290.9,227.8 291.4,224.1 292.0,220.2C292.6,216.3 293.3,212.4 294.2,208.5C295.1,204.6 295.9,200.6 297.1,196.7C298.3,192.8 300.3,187.6 301.5,185.0C302.7,182.4 302.8,183.4 304.2,181.3C305.6,179.2 308.0,175.3 310.1,172.5C312.2,169.7 314.4,167.1 316.7,164.5C319.0,161.9 321.3,159.4 324.0,157.1C326.7,154.8 329.6,152.4 332.8,150.5C336.0,148.6 339.7,146.9 343.1,145.4C346.5,143.9 350.1,142.8 353.3,141.7C356.5,140.6 358.7,139.7 362.1,138.8C365.5,138.0 370.0,137.2 373.9,136.6C377.8,136.0 382.6,135.4 385.6,135.1C388.6,134.8 388.7,134.6 391.7,134.5C394.7,134.4 399.8,134.0 403.5,134.5C407.2,135.0 410.3,136.3 413.7,137.5C417.1,138.7 420.6,140.2 424.0,141.9C427.4,143.6 431.1,145.6 434.3,147.7C437.5,149.8 440.2,151.9 443.1,154.3C446.0,156.8 449.2,159.6 451.9,162.4C454.6,165.2 457.0,168.3 459.2,171.2C461.4,174.1 463.4,176.9 465.1,180.0C466.8,183.1 467.3,185.2 469.2,190.0C471.1,194.8 474.7,202.9 476.7,208.7C478.7,214.5 480.3,220.3 481.4,225.0C482.5,229.7 482.8,232.8 483.3,236.7C483.8,240.6 484.2,244.6 484.3,248.5C484.4,252.4 484.2,256.3 483.9,260.2C483.6,264.1 483.1,268.3 482.4,271.9C481.7,275.5 480.8,278.7 479.8,282.0C478.8,285.3 477.9,288.1 476.5,291.7C475.1,295.3 473.3,299.8 471.4,303.5C469.4,307.2 467.2,310.3 464.8,313.7C462.4,317.1 459.5,320.8 456.7,324.0C453.9,327.2 450.7,330.1 447.9,332.8C445.1,335.5 442.2,338.3 439.9,340.0C437.6,341.7 436.9,341.4 433.9,342.8C430.9,344.2 426.0,346.8 422.1,348.3C418.2,349.8 414.3,350.8 410.4,351.6C406.5,352.4 403.1,352.8 398.7,353.1C394.3,353.4 388.6,353.6 384.0,353.4C379.4,353.2 374.9,352.6 370.8,351.9C366.7,351.2 362.8,350.1 359.1,349.0C355.4,347.9 352.0,346.7 348.8,345.3C345.6,343.9 342.2,342.2 340.0,340.9C337.8,339.6 338.4,339.6 335.7,337.7C333.0,335.8 327.7,332.5 324.0,329.6C320.3,326.7 316.8,323.3 313.7,320.1C310.6,316.9 308.1,313.8 305.7,310.5C303.3,307.2 301.0,304.2 299.1,300.3C297.2,296.4 295.4,291.1 294.2,286.9C293.0,282.7 292.7,279.1 292.0,275.2C291.3,271.3 290.6,267.4 290.2,263.5C289.8,259.6 289.5,254.8 289.4,251.7C289.3,248.6 289.6,248.3 289.8,245.0Z" fill="#929054"/><path d="M294.2,245.0C294.5,241.7 294.7,236.0 295.2,231.9C295.7,227.8 296.4,224.1 297.1,220.2C297.8,216.3 298.4,212.4 299.3,208.5C300.2,204.6 301.4,200.6 302.6,196.7C303.8,192.8 305.6,187.6 306.7,185.0C307.8,182.4 308.0,183.4 309.3,181.3C310.6,179.2 312.7,175.3 314.5,172.5C316.3,169.7 318.2,166.9 320.3,164.5C322.4,162.1 324.3,160.0 326.9,157.9C329.5,155.8 332.8,153.7 335.7,152.0C338.6,150.3 341.1,149.1 344.5,147.6C347.9,146.1 352.4,144.5 356.3,143.2C360.2,141.8 364.1,140.5 368.0,139.5C371.9,138.5 376.6,137.8 379.7,137.0C382.8,136.2 385.0,135.0 386.6,135.0C388.2,135.0 388.1,136.6 389.5,137.0C390.9,137.4 392.1,136.7 394.7,137.5C397.3,138.3 401.5,140.3 404.9,141.9C408.3,143.5 411.8,145.2 415.2,147.0C418.6,148.8 422.3,151.0 425.5,152.9C428.7,154.8 431.4,156.5 434.3,158.7C437.2,160.9 440.4,163.5 443.1,166.1C445.8,168.7 448.2,171.3 450.4,174.1C452.6,176.9 454.8,180.2 456.3,182.9C457.9,185.6 457.9,185.7 459.7,190.0C461.5,194.3 465.3,202.9 467.3,208.7C469.3,214.5 470.5,220.3 471.6,225.0C472.7,229.7 473.5,232.8 474.1,236.7C474.8,240.6 475.3,244.6 475.5,248.5C475.7,252.4 475.5,256.3 475.1,260.2C474.7,264.1 474.0,268.6 473.3,271.9C472.6,275.2 471.6,276.7 470.7,280.0C469.8,283.3 469.0,287.8 467.7,291.7C466.4,295.6 464.6,299.9 462.6,303.5C460.7,307.1 458.3,309.9 456.0,313.0C453.7,316.1 451.1,319.2 448.7,321.8C446.2,324.4 444.2,326.3 441.3,328.4C438.4,330.5 434.8,332.4 431.1,334.3C427.4,336.2 423.1,338.1 419.2,339.5C415.3,340.9 411.4,342.0 407.5,342.8C403.6,343.6 399.9,344.2 395.7,344.3C391.5,344.4 386.4,343.8 382.5,343.1C378.6,342.4 375.7,341.1 372.3,339.9C368.9,338.7 365.2,336.8 362.0,336.1C358.8,335.4 355.9,335.4 353.2,335.5C350.5,335.6 348.1,337.1 345.9,337.0C343.7,336.9 341.4,335.6 340.0,335.1C338.6,334.6 339.4,335.3 337.2,334.0C335.0,332.7 330.2,330.0 326.9,327.4C323.6,324.8 320.2,321.7 317.4,318.6C314.6,315.6 312.3,312.4 310.1,309.1C307.9,305.8 306.0,302.5 304.2,298.8C302.4,295.1 300.6,290.8 299.3,286.9C298.0,283.0 297.0,279.1 296.1,275.2C295.2,271.3 294.6,267.4 294.2,263.5C293.8,259.6 293.5,254.8 293.5,251.7C293.5,248.6 293.9,248.3 294.2,245.0Z" fill="none" stroke="#aaa468" stroke-width="9" filter="url(#b1)"/><path d="M294.2,245.0C294.5,241.7 294.7,236.0 295.2,231.9C295.7,227.8 296.4,224.1 297.1,220.2C297.8,216.3 298.4,212.4 299.3,208.5C300.2,204.6 301.4,200.6 302.6,196.7C303.8,192.8 305.6,187.6 306.7,185.0C307.8,182.4 308.0,183.4 309.3,181.3C310.6,179.2 312.7,175.3 314.5,172.5C316.3,169.7 318.2,166.9 320.3,164.5C322.4,162.1 324.3,160.0 326.9,157.9C329.5,155.8 332.8,153.7 335.7,152.0C338.6,150.3 341.1,149.1 344.5,147.6C347.9,146.1 352.4,144.5 356.3,143.2C360.2,141.8 364.1,140.5 368.0,139.5C371.9,138.5 376.6,137.8 379.7,137.0C382.8,136.2 385.0,135.0 386.6,135.0C388.2,135.0 388.1,136.6 389.5,137.0C390.9,137.4 392.1,136.7 394.7,137.5C397.3,138.3 401.5,140.3 404.9,141.9C408.3,143.5 411.8,145.2 415.2,147.0C418.6,148.8 422.3,151.0 425.5,152.9C428.7,154.8 431.4,156.5 434.3,158.7C437.2,160.9 440.4,163.5 443.1,166.1C445.8,168.7 448.2,171.3 450.4,174.1C452.6,176.9 454.8,180.2 456.3,182.9C457.9,185.6 457.9,185.7 459.7,190.0C461.5,194.3 465.3,202.9 467.3,208.7C469.3,214.5 470.5,220.3 471.6,225.0C472.7,229.7 473.5,232.8 474.1,236.7C474.8,240.6 475.3,244.6 475.5,248.5C475.7,252.4 475.5,256.3 475.1,260.2C474.7,264.1 474.0,268.6 473.3,271.9C472.6,275.2 471.6,276.7 470.7,280.0C469.8,283.3 469.0,287.8 467.7,291.7C466.4,295.6 464.6,299.9 462.6,303.5C460.7,307.1 458.3,309.9 456.0,313.0C453.7,316.1 451.1,319.2 448.7,321.8C446.2,324.4 444.2,326.3 441.3,328.4C438.4,330.5 434.8,332.4 431.1,334.3C427.4,336.2 423.1,338.1 419.2,339.5C415.3,340.9 411.4,342.0 407.5,342.8C403.6,343.6 399.9,344.2 395.7,344.3C391.5,344.4 386.4,343.8 382.5,343.1C378.6,342.4 375.7,341.1 372.3,339.9C368.9,338.7 365.2,336.8 362.0,336.1C358.8,335.4 355.9,335.4 353.2,335.5C350.5,335.6 348.1,337.1 345.9,337.0C343.7,336.9 341.4,335.6 340.0,335.1C338.6,334.6 339.4,335.3 337.2,334.0C335.0,332.7 330.2,330.0 326.9,327.4C323.6,324.8 320.2,321.7 317.4,318.6C314.6,315.6 312.3,312.4 310.1,309.1C307.9,305.8 306.0,302.5 304.2,298.8C302.4,295.1 300.6,290.8 299.3,286.9C298.0,283.0 297.0,279.1 296.1,275.2C295.2,271.3 294.6,267.4 294.2,263.5C293.8,259.6 293.5,254.8 293.5,251.7C293.5,248.6 293.9,248.3 294.2,245.0Z" fill="none" stroke="#bcb67c" stroke-width="6" filter="url(#b1)"/><path d="M289.8,245.0C290.0,241.7 290.1,236.0 290.5,231.9C290.9,227.8 291.4,224.1 292.0,220.2C292.6,216.3 293.3,212.4 294.2,208.5C295.1,204.6 295.9,200.6 297.1,196.7C298.3,192.8 300.3,187.6 301.5,185.0C302.7,182.4 302.8,183.4 304.2,181.3C305.6,179.2 308.0,175.3 310.1,172.5C312.2,169.7 314.4,167.1 316.7,164.5C319.0,161.9 321.3,159.4 324.0,157.1C326.7,154.8 329.6,152.4 332.8,150.5C336.0,148.6 339.7,146.9 343.1,145.4C346.5,143.9 350.1,142.8 353.3,141.7C356.5,140.6 358.7,139.7 362.1,138.8C365.5,138.0 370.0,137.2 373.9,136.6C377.8,136.0 382.6,135.4 385.6,135.1C388.6,134.8 388.7,134.6 391.7,134.5C394.7,134.4 399.8,134.0 403.5,134.5C407.2,135.0 410.3,136.3 413.7,137.5C417.1,138.7 420.6,140.2 424.0,141.9C427.4,143.6 431.1,145.6 434.3,147.7C437.5,149.8 440.2,151.9 443.1,154.3C446.0,156.8 449.2,159.6 451.9,162.4C454.6,165.2 457.0,168.3 459.2,171.2C461.4,174.1 463.4,176.9 465.1,180.0C466.8,183.1 467.3,185.2 469.2,190.0C471.1,194.8 474.7,202.9 476.7,208.7C478.7,214.5 480.3,220.3 481.4,225.0C482.5,229.7 482.8,232.8 483.3,236.7C483.8,240.6 484.2,244.6 484.3,248.5C484.4,252.4 484.2,256.3 483.9,260.2C483.6,264.1 483.1,268.3 482.4,271.9C481.7,275.5 480.8,278.7 479.8,282.0C478.8,285.3 477.9,288.1 476.5,291.7C475.1,295.3 473.3,299.8 471.4,303.5C469.4,307.2 467.2,310.3 464.8,313.7C462.4,317.1 459.5,320.8 456.7,324.0C453.9,327.2 450.7,330.1 447.9,332.8C445.1,335.5 442.2,338.3 439.9,340.0C437.6,341.7 436.9,341.4 433.9,342.8C430.9,344.2 426.0,346.8 422.1,348.3C418.2,349.8 414.3,350.8 410.4,351.6C406.5,352.4 403.1,352.8 398.7,353.1C394.3,353.4 388.6,353.6 384.0,353.4C379.4,353.2 374.9,352.6 370.8,351.9C366.7,351.2 362.8,350.1 359.1,349.0C355.4,347.9 352.0,346.7 348.8,345.3C345.6,343.9 342.2,342.2 340.0,340.9C337.8,339.6 338.4,339.6 335.7,337.7C333.0,335.8 327.7,332.5 324.0,329.6C320.3,326.7 316.8,323.3 313.7,320.1C310.6,316.9 308.1,313.8 305.7,310.5C303.3,307.2 301.0,304.2 299.1,300.3C297.2,296.4 295.4,291.1 294.2,286.9C293.0,282.7 292.7,279.1 292.0,275.2C291.3,271.3 290.6,267.4 290.2,263.5C289.8,259.6 289.5,254.8 289.4,251.7C289.3,248.6 289.6,248.3 289.8,245.0Z" fill="none" stroke="#5c622a" stroke-width="2.6" filter="url(#b05)"/></g><path d="M90.6,245.0C90.6,241.7 91.0,240.2 91.4,236.9C91.8,233.6 92.4,229.1 92.9,225.2C93.5,221.3 94.2,217.4 94.7,213.5C95.2,209.6 95.5,205.6 96.2,201.7C96.9,197.8 98.0,193.1 99.0,190.0C100.0,186.9 101.0,185.9 102.5,183.0C104.0,180.1 106.0,175.8 108.0,172.5C110.0,169.2 112.1,165.8 114.6,163.0C117.1,160.2 120.7,158.0 123.2,156.0C125.7,154.0 127.2,152.6 129.4,150.8C131.6,149.1 134.1,147.1 136.4,145.5C138.8,143.9 141.3,142.3 143.5,141.1C145.7,139.8 148.0,138.9 149.6,138.0C151.2,137.1 152.3,136.6 153.1,135.8C153.9,135.0 153.5,133.9 154.5,133.2C155.5,132.5 157.6,131.8 159.3,131.4C161.0,131.0 162.6,130.8 164.6,130.6C166.6,130.4 169.7,130.4 171.6,130.4C173.5,130.4 174.3,130.6 176.0,130.7C177.7,130.8 179.2,130.4 181.6,130.8C184.0,131.2 188.2,132.2 190.4,132.9C192.6,133.6 192.8,134.2 195.0,135.1C197.2,136.0 200.6,137.0 203.8,138.5C207.0,140.0 210.7,141.9 214.1,143.9C217.5,145.9 221.1,148.2 224.3,150.5C227.5,152.8 230.2,155.0 233.1,157.6C236.0,160.2 239.2,163.1 241.9,165.9C244.6,168.8 247.1,171.8 249.3,174.7C251.5,177.6 253.6,180.9 255.1,183.5C256.6,186.1 257.2,187.2 258.4,190.0C259.6,192.8 261.0,196.3 262.3,200.0C263.6,203.7 265.0,207.8 266.0,212.0C267.0,216.2 267.6,221.4 268.4,225.0C269.2,228.6 270.1,230.1 270.7,233.4C271.3,236.7 272.0,241.1 272.2,245.0C272.4,248.9 272.1,252.8 271.9,256.7C271.6,260.6 271.3,264.6 270.7,268.5C270.1,272.4 269.2,276.3 268.2,280.2C267.2,284.1 265.5,288.6 264.5,291.9C263.5,295.2 263.1,297.2 262.0,300.0C260.9,302.8 259.4,305.9 257.6,308.8C255.8,311.7 253.3,314.9 251.0,317.6C248.7,320.3 246.4,322.6 243.7,324.9C241.0,327.2 237.1,330.3 234.9,331.5C232.7,332.7 232.7,331.9 230.5,332.0C228.3,332.1 224.6,331.7 221.7,332.0C218.8,332.3 215.8,332.6 212.9,333.7C210.0,334.8 207.0,337.0 204.1,338.4C201.2,339.8 198.5,340.9 195.3,341.8C192.1,342.7 187.5,343.6 185.0,344.0C182.5,344.4 183.3,344.4 180.3,344.3C177.3,344.2 171.5,344.2 167.1,343.7C162.7,343.2 158.1,342.4 153.9,341.1C149.8,339.8 146.1,338.0 142.2,335.9C138.3,333.8 134.2,331.3 130.5,328.6C126.8,325.9 123.4,322.9 120.2,319.8C117.0,316.8 114.1,313.6 111.4,310.3C108.7,307.0 105.8,303.1 104.1,300.0C102.4,296.9 102.2,295.2 101.0,291.9C99.8,288.6 98.2,284.1 96.9,280.2C95.7,276.3 94.4,272.4 93.5,268.5C92.6,264.6 91.9,260.6 91.4,256.7C90.9,252.8 90.6,248.3 90.6,245.0Z" fill="url(#gL)"/><path d="M294.2,245.0C294.5,241.7 294.7,236.0 295.2,231.9C295.7,227.8 296.4,224.1 297.1,220.2C297.8,216.3 298.4,212.4 299.3,208.5C300.2,204.6 301.4,200.6 302.6,196.7C303.8,192.8 305.6,187.6 306.7,185.0C307.8,182.4 308.0,183.4 309.3,181.3C310.6,179.2 312.7,175.3 314.5,172.5C316.3,169.7 318.2,166.9 320.3,164.5C322.4,162.1 324.3,160.0 326.9,157.9C329.5,155.8 332.8,153.7 335.7,152.0C338.6,150.3 341.1,149.1 344.5,147.6C347.9,146.1 352.4,144.5 356.3,143.2C360.2,141.8 364.1,140.5 368.0,139.5C371.9,138.5 376.6,137.8 379.7,137.0C382.8,136.2 385.0,135.0 386.6,135.0C388.2,135.0 388.1,136.6 389.5,137.0C390.9,137.4 392.1,136.7 394.7,137.5C397.3,138.3 401.5,140.3 404.9,141.9C408.3,143.5 411.8,145.2 415.2,147.0C418.6,148.8 422.3,151.0 425.5,152.9C428.7,154.8 431.4,156.5 434.3,158.7C437.2,160.9 440.4,163.5 443.1,166.1C445.8,168.7 448.2,171.3 450.4,174.1C452.6,176.9 454.8,180.2 456.3,182.9C457.9,185.6 457.9,185.7 459.7,190.0C461.5,194.3 465.3,202.9 467.3,208.7C469.3,214.5 470.5,220.3 471.6,225.0C472.7,229.7 473.5,232.8 474.1,236.7C474.8,240.6 475.3,244.6 475.5,248.5C475.7,252.4 475.5,256.3 475.1,260.2C474.7,264.1 474.0,268.6 473.3,271.9C472.6,275.2 471.6,276.7 470.7,280.0C469.8,283.3 469.0,287.8 467.7,291.7C466.4,295.6 464.6,299.9 462.6,303.5C460.7,307.1 458.3,309.9 456.0,313.0C453.7,316.1 451.1,319.2 448.7,321.8C446.2,324.4 444.2,326.3 441.3,328.4C438.4,330.5 434.8,332.4 431.1,334.3C427.4,336.2 423.1,338.1 419.2,339.5C415.3,340.9 411.4,342.0 407.5,342.8C403.6,343.6 399.9,344.2 395.7,344.3C391.5,344.4 386.4,343.8 382.5,343.1C378.6,342.4 375.7,341.1 372.3,339.9C368.9,338.7 365.2,336.8 362.0,336.1C358.8,335.4 355.9,335.4 353.2,335.5C350.5,335.6 348.1,337.1 345.9,337.0C343.7,336.9 341.4,335.6 340.0,335.1C338.6,334.6 339.4,335.3 337.2,334.0C335.0,332.7 330.2,330.0 326.9,327.4C323.6,324.8 320.2,321.7 317.4,318.6C314.6,315.6 312.3,312.4 310.1,309.1C307.9,305.8 306.0,302.5 304.2,298.8C302.4,295.1 300.6,290.8 299.3,286.9C298.0,283.0 297.0,279.1 296.1,275.2C295.2,271.3 294.6,267.4 294.2,263.5C293.8,259.6 293.5,254.8 293.5,251.7C293.5,248.6 293.9,248.3 294.2,245.0Z" fill="url(#gR)"/><g clip-path="url(#cL)">
<path d="M90.6,245.0C90.6,241.7 91.0,240.2 91.4,236.9C91.8,233.6 92.4,229.1 92.9,225.2C93.5,221.3 94.2,217.4 94.7,213.5C95.2,209.6 95.5,205.6 96.2,201.7C96.9,197.8 98.0,193.1 99.0,190.0C100.0,186.9 101.0,185.9 102.5,183.0C104.0,180.1 106.0,175.8 108.0,172.5C110.0,169.2 112.1,165.8 114.6,163.0C117.1,160.2 120.7,158.0 123.2,156.0C125.7,154.0 127.2,152.6 129.4,150.8C131.6,149.1 134.1,147.1 136.4,145.5C138.8,143.9 141.3,142.3 143.5,141.1C145.7,139.8 148.0,138.9 149.6,138.0C151.2,137.1 152.3,136.6 153.1,135.8C153.9,135.0 153.5,133.9 154.5,133.2C155.5,132.5 157.6,131.8 159.3,131.4C161.0,131.0 162.6,130.8 164.6,130.6C166.6,130.4 169.7,130.4 171.6,130.4C173.5,130.4 174.3,130.6 176.0,130.7C177.7,130.8 179.2,130.4 181.6,130.8C184.0,131.2 188.2,132.2 190.4,132.9C192.6,133.6 192.8,134.2 195.0,135.1C197.2,136.0 200.6,137.0 203.8,138.5C207.0,140.0 210.7,141.9 214.1,143.9C217.5,145.9 221.1,148.2 224.3,150.5C227.5,152.8 230.2,155.0 233.1,157.6C236.0,160.2 239.2,163.1 241.9,165.9C244.6,168.8 247.1,171.8 249.3,174.7C251.5,177.6 253.6,180.9 255.1,183.5C256.6,186.1 257.2,187.2 258.4,190.0C259.6,192.8 261.0,196.3 262.3,200.0C263.6,203.7 265.0,207.8 266.0,212.0C267.0,216.2 267.6,221.4 268.4,225.0C269.2,228.6 270.1,230.1 270.7,233.4C271.3,236.7 272.0,241.1 272.2,245.0C272.4,248.9 272.1,252.8 271.9,256.7C271.6,260.6 271.3,264.6 270.7,268.5C270.1,272.4 269.2,276.3 268.2,280.2C267.2,284.1 265.5,288.6 264.5,291.9C263.5,295.2 263.1,297.2 262.0,300.0C260.9,302.8 259.4,305.9 257.6,308.8C255.8,311.7 253.3,314.9 251.0,317.6C248.7,320.3 246.4,322.6 243.7,324.9C241.0,327.2 237.1,330.3 234.9,331.5C232.7,332.7 232.7,331.9 230.5,332.0C228.3,332.1 224.6,331.7 221.7,332.0C218.8,332.3 215.8,332.6 212.9,333.7C210.0,334.8 207.0,337.0 204.1,338.4C201.2,339.8 198.5,340.9 195.3,341.8C192.1,342.7 187.5,343.6 185.0,344.0C182.5,344.4 183.3,344.4 180.3,344.3C177.3,344.2 171.5,344.2 167.1,343.7C162.7,343.2 158.1,342.4 153.9,341.1C149.8,339.8 146.1,338.0 142.2,335.9C138.3,333.8 134.2,331.3 130.5,328.6C126.8,325.9 123.4,322.9 120.2,319.8C117.0,316.8 114.1,313.6 111.4,310.3C108.7,307.0 105.8,303.1 104.1,300.0C102.4,296.9 102.2,295.2 101.0,291.9C99.8,288.6 98.2,284.1 96.9,280.2C95.7,276.3 94.4,272.4 93.5,268.5C92.6,264.6 91.9,260.6 91.4,256.7C90.9,252.8 90.6,248.3 90.6,245.0Z" fill="none" stroke="#bc8458" stroke-width="5" opacity="0.5" filter="url(#b1)"/>
<ellipse cx="234" cy="192" rx="26" ry="42" fill="#ae3a30" opacity="0.62" filter="url(#b12)" transform="rotate(-20 234 192)"/>
<ellipse cx="240" cy="270" rx="26" ry="40" fill="#9e2822" opacity="0.6" filter="url(#b12)"/>
<ellipse cx="200" cy="150" rx="30" ry="12" fill="#a2322a" opacity="0.4" filter="url(#b7)"/>
<ellipse cx="160" cy="158" rx="30" ry="11" fill="#601812" opacity="0.55" filter="url(#b4)" transform="rotate(-22 160 158)"/><ellipse cx="150" cy="158" rx="1.8" ry="4" fill="#561410" opacity="0.5" filter="url(#b1)" transform="rotate(60 150 158)"/><ellipse cx="158" cy="153" rx="1.8" ry="4" fill="#561410" opacity="0.5" filter="url(#b1)" transform="rotate(70 158 153)"/><ellipse cx="167" cy="150" rx="1.8" ry="4" fill="#561410" opacity="0.5" filter="url(#b1)" transform="rotate(80 167 150)"/><ellipse cx="176" cy="149" rx="1.8" ry="4" fill="#561410" opacity="0.5" filter="url(#b1)" transform="rotate(88 176 149)"/><ellipse cx="143" cy="166" rx="1.8" ry="4" fill="#561410" opacity="0.5" filter="url(#b1)" transform="rotate(50 143 166)"/><ellipse cx="152" cy="171" rx="1.8" ry="4" fill="#561410" opacity="0.5" filter="url(#b1)" transform="rotate(55 152 171)"/><ellipse cx="161" cy="176" rx="1.8" ry="4" fill="#561410" opacity="0.5" filter="url(#b1)" transform="rotate(60 161 176)"/><ellipse cx="148" cy="186" rx="1.8" ry="4" fill="#561410" opacity="0.5" filter="url(#b1)" transform="rotate(40 148 186)"/><ellipse cx="153" cy="197" rx="1.8" ry="4" fill="#561410" opacity="0.5" filter="url(#b1)" transform="rotate(30 153 197)"/>
<ellipse cx="126" cy="200" rx="22" ry="36" fill="#651812" opacity="0.5" filter="url(#b7)"/>
<ellipse cx="138" cy="262" rx="14" ry="40" fill="#6a1810" opacity="0.5" filter="url(#b7)"/>
<ellipse cx="108" cy="250" rx="10" ry="50" fill="#8c2a1e" opacity="0.5" filter="url(#b7)"/>
<ellipse cx="175" cy="322" rx="46" ry="14" fill="#701810" opacity="0.4" filter="url(#b7)"/>
<ellipse cx="160" cy="255" rx="12" ry="26" fill="#96281c" opacity="0.45" filter="url(#b7)"/>
<path d="M190.5,131 L189.5,166" stroke="#c08a68" stroke-width="1.5" opacity="0.55" filter="url(#b1)"/>
<g mask="url(#mBot)"><path d="M90.6,245.0C90.6,241.7 91.0,240.2 91.4,236.9C91.8,233.6 92.4,229.1 92.9,225.2C93.5,221.3 94.2,217.4 94.7,213.5C95.2,209.6 95.5,205.6 96.2,201.7C96.9,197.8 98.0,193.1 99.0,190.0C100.0,186.9 101.0,185.9 102.5,183.0C104.0,180.1 106.0,175.8 108.0,172.5C110.0,169.2 112.1,165.8 114.6,163.0C117.1,160.2 120.7,158.0 123.2,156.0C125.7,154.0 127.2,152.6 129.4,150.8C131.6,149.1 134.1,147.1 136.4,145.5C138.8,143.9 141.3,142.3 143.5,141.1C145.7,139.8 148.0,138.9 149.6,138.0C151.2,137.1 152.3,136.6 153.1,135.8C153.9,135.0 153.5,133.9 154.5,133.2C155.5,132.5 157.6,131.8 159.3,131.4C161.0,131.0 162.6,130.8 164.6,130.6C166.6,130.4 169.7,130.4 171.6,130.4C173.5,130.4 174.3,130.6 176.0,130.7C177.7,130.8 179.2,130.4 181.6,130.8C184.0,131.2 188.2,132.2 190.4,132.9C192.6,133.6 192.8,134.2 195.0,135.1C197.2,136.0 200.6,137.0 203.8,138.5C207.0,140.0 210.7,141.9 214.1,143.9C217.5,145.9 221.1,148.2 224.3,150.5C227.5,152.8 230.2,155.0 233.1,157.6C236.0,160.2 239.2,163.1 241.9,165.9C244.6,168.8 247.1,171.8 249.3,174.7C251.5,177.6 253.6,180.9 255.1,183.5C256.6,186.1 257.2,187.2 258.4,190.0C259.6,192.8 261.0,196.3 262.3,200.0C263.6,203.7 265.0,207.8 266.0,212.0C267.0,216.2 267.6,221.4 268.4,225.0C269.2,228.6 270.1,230.1 270.7,233.4C271.3,236.7 272.0,241.1 272.2,245.0C272.4,248.9 272.1,252.8 271.9,256.7C271.6,260.6 271.3,264.6 270.7,268.5C270.1,272.4 269.2,276.3 268.2,280.2C267.2,284.1 265.5,288.6 264.5,291.9C263.5,295.2 263.1,297.2 262.0,300.0C260.9,302.8 259.4,305.9 257.6,308.8C255.8,311.7 253.3,314.9 251.0,317.6C248.7,320.3 246.4,322.6 243.7,324.9C241.0,327.2 237.1,330.3 234.9,331.5C232.7,332.7 232.7,331.9 230.5,332.0C228.3,332.1 224.6,331.7 221.7,332.0C218.8,332.3 215.8,332.6 212.9,333.7C210.0,334.8 207.0,337.0 204.1,338.4C201.2,339.8 198.5,340.9 195.3,341.8C192.1,342.7 187.5,343.6 185.0,344.0C182.5,344.4 183.3,344.4 180.3,344.3C177.3,344.2 171.5,344.2 167.1,343.7C162.7,343.2 158.1,342.4 153.9,341.1C149.8,339.8 146.1,338.0 142.2,335.9C138.3,333.8 134.2,331.3 130.5,328.6C126.8,325.9 123.4,322.9 120.2,319.8C117.0,316.8 114.1,313.6 111.4,310.3C108.7,307.0 105.8,303.1 104.1,300.0C102.4,296.9 102.2,295.2 101.0,291.9C99.8,288.6 98.2,284.1 96.9,280.2C95.7,276.3 94.4,272.4 93.5,268.5C92.6,264.6 91.9,260.6 91.4,256.7C90.9,252.8 90.6,248.3 90.6,245.0Z" fill="none" stroke="#c89468" stroke-width="9" opacity="0.55" filter="url(#b2)"/></g><rect x="80" y="120" width="205" height="240" filter="url(#nz)" opacity="0.36"/>
</g><g clip-path="url(#cR)">
<path d="M294.2,245.0C294.5,241.7 294.7,236.0 295.2,231.9C295.7,227.8 296.4,224.1 297.1,220.2C297.8,216.3 298.4,212.4 299.3,208.5C300.2,204.6 301.4,200.6 302.6,196.7C303.8,192.8 305.6,187.6 306.7,185.0C307.8,182.4 308.0,183.4 309.3,181.3C310.6,179.2 312.7,175.3 314.5,172.5C316.3,169.7 318.2,166.9 320.3,164.5C322.4,162.1 324.3,160.0 326.9,157.9C329.5,155.8 332.8,153.7 335.7,152.0C338.6,150.3 341.1,149.1 344.5,147.6C347.9,146.1 352.4,144.5 356.3,143.2C360.2,141.8 364.1,140.5 368.0,139.5C371.9,138.5 376.6,137.8 379.7,137.0C382.8,136.2 385.0,135.0 386.6,135.0C388.2,135.0 388.1,136.6 389.5,137.0C390.9,137.4 392.1,136.7 394.7,137.5C397.3,138.3 401.5,140.3 404.9,141.9C408.3,143.5 411.8,145.2 415.2,147.0C418.6,148.8 422.3,151.0 425.5,152.9C428.7,154.8 431.4,156.5 434.3,158.7C437.2,160.9 440.4,163.5 443.1,166.1C445.8,168.7 448.2,171.3 450.4,174.1C452.6,176.9 454.8,180.2 456.3,182.9C457.9,185.6 457.9,185.7 459.7,190.0C461.5,194.3 465.3,202.9 467.3,208.7C469.3,214.5 470.5,220.3 471.6,225.0C472.7,229.7 473.5,232.8 474.1,236.7C474.8,240.6 475.3,244.6 475.5,248.5C475.7,252.4 475.5,256.3 475.1,260.2C474.7,264.1 474.0,268.6 473.3,271.9C472.6,275.2 471.6,276.7 470.7,280.0C469.8,283.3 469.0,287.8 467.7,291.7C466.4,295.6 464.6,299.9 462.6,303.5C460.7,307.1 458.3,309.9 456.0,313.0C453.7,316.1 451.1,319.2 448.7,321.8C446.2,324.4 444.2,326.3 441.3,328.4C438.4,330.5 434.8,332.4 431.1,334.3C427.4,336.2 423.1,338.1 419.2,339.5C415.3,340.9 411.4,342.0 407.5,342.8C403.6,343.6 399.9,344.2 395.7,344.3C391.5,344.4 386.4,343.8 382.5,343.1C378.6,342.4 375.7,341.1 372.3,339.9C368.9,338.7 365.2,336.8 362.0,336.1C358.8,335.4 355.9,335.4 353.2,335.5C350.5,335.6 348.1,337.1 345.9,337.0C343.7,336.9 341.4,335.6 340.0,335.1C338.6,334.6 339.4,335.3 337.2,334.0C335.0,332.7 330.2,330.0 326.9,327.4C323.6,324.8 320.2,321.7 317.4,318.6C314.6,315.6 312.3,312.4 310.1,309.1C307.9,305.8 306.0,302.5 304.2,298.8C302.4,295.1 300.6,290.8 299.3,286.9C298.0,283.0 297.0,279.1 296.1,275.2C295.2,271.3 294.6,267.4 294.2,263.5C293.8,259.6 293.5,254.8 293.5,251.7C293.5,248.6 293.9,248.3 294.2,245.0Z" fill="none" stroke="#bc8458" stroke-width="5" opacity="0.5" filter="url(#b1)"/>
<ellipse cx="332" cy="182" rx="34" ry="38" fill="#c65a4a" opacity="0.85" filter="url(#b7)"/>
<rect x="339" y="160" width="20" height="19" rx="5" fill="#aa4436" opacity="0.7" filter="url(#b2)"/>
<ellipse cx="314" cy="222" rx="12" ry="26" fill="#b03e30" opacity="0.6" filter="url(#b7)"/>
<ellipse cx="398" cy="172" rx="36" ry="30" fill="#aa362c" opacity="0.5" filter="url(#b12)"/>
<ellipse cx="380" cy="205" rx="14" ry="30" fill="#a83428" opacity="0.5" filter="url(#b7)"/>
<path d="M400,152 Q442,168 456,215 Q462,250 456,285" fill="none" stroke="#6c1c14" stroke-width="12" opacity="0.3" filter="url(#b4)"/><ellipse cx="386.5" cy="160.1" rx="2.4" ry="5.5" fill="#5e1610" opacity="0.55" filter="url(#b1)" transform="rotate(2 386.5 160.1)"/><ellipse cx="398.3" cy="165.8" rx="2.4" ry="5.5" fill="#5e1610" opacity="0.55" filter="url(#b1)" transform="rotate(10 398.3 165.8)"/><ellipse cx="411.1" cy="166.3" rx="2.4" ry="5.5" fill="#5e1610" opacity="0.55" filter="url(#b1)" transform="rotate(19 411.1 166.3)"/><ellipse cx="420.5" cy="176.5" rx="2.4" ry="5.5" fill="#5e1610" opacity="0.55" filter="url(#b1)" transform="rotate(28 420.5 176.5)"/><ellipse cx="431.4" cy="181.1" rx="2.4" ry="5.5" fill="#5e1610" opacity="0.55" filter="url(#b1)" transform="rotate(36 431.4 181.1)"/><ellipse cx="436.8" cy="193.3" rx="2.4" ry="5.5" fill="#5e1610" opacity="0.55" filter="url(#b1)" transform="rotate(45 436.8 193.3)"/><ellipse cx="445.9" cy="201.7" rx="2.4" ry="5.5" fill="#5e1610" opacity="0.55" filter="url(#b1)" transform="rotate(54 445.9 201.7)"/><ellipse cx="447.9" cy="215.3" rx="2.4" ry="5.5" fill="#5e1610" opacity="0.55" filter="url(#b1)" transform="rotate(64 447.9 215.3)"/><ellipse cx="454.4" cy="226.7" rx="2.4" ry="5.5" fill="#5e1610" opacity="0.55" filter="url(#b1)" transform="rotate(75 454.4 226.7)"/><ellipse cx="452.7" cy="240.3" rx="2.4" ry="5.5" fill="#5e1610" opacity="0.55" filter="url(#b1)" transform="rotate(85 452.7 240.3)"/><ellipse cx="455.8" cy="255.0" rx="2.4" ry="5.5" fill="#5e1610" opacity="0.55" filter="url(#b1)" transform="rotate(97 455.8 255.0)"/><ellipse cx="450.2" cy="268.6" rx="2.4" ry="5.5" fill="#5e1610" opacity="0.55" filter="url(#b1)" transform="rotate(109 450.2 268.6)"/><ellipse cx="448.9" cy="283.7" rx="2.4" ry="5.5" fill="#5e1610" opacity="0.55" filter="url(#b1)" transform="rotate(120 448.9 283.7)"/>
<ellipse cx="380" cy="300" rx="60" ry="22" fill="#7a1a12" opacity="0.5" filter="url(#b12)"/>
<ellipse cx="325" cy="285" rx="18" ry="26" fill="#7a1c14" opacity="0.4" filter="url(#b7)"/><path d="M313.5,296.5 Q318,298 321.5,305" stroke="#c08a62" stroke-width="2" fill="none" opacity="0.8" filter="url(#b05)"/><path d="M318,296 Q323,299 326,307" stroke="#5a140f" stroke-width="2.6" fill="none" opacity="0.6" filter="url(#b1)"/>
<path d="M364,141 L366.5,204" stroke="#d8947a" stroke-width="1.6" opacity="0.6" filter="url(#b1)"/>
<g mask="url(#mBot)"><path d="M294.2,245.0C294.5,241.7 294.7,236.0 295.2,231.9C295.7,227.8 296.4,224.1 297.1,220.2C297.8,216.3 298.4,212.4 299.3,208.5C300.2,204.6 301.4,200.6 302.6,196.7C303.8,192.8 305.6,187.6 306.7,185.0C307.8,182.4 308.0,183.4 309.3,181.3C310.6,179.2 312.7,175.3 314.5,172.5C316.3,169.7 318.2,166.9 320.3,164.5C322.4,162.1 324.3,160.0 326.9,157.9C329.5,155.8 332.8,153.7 335.7,152.0C338.6,150.3 341.1,149.1 344.5,147.6C347.9,146.1 352.4,144.5 356.3,143.2C360.2,141.8 364.1,140.5 368.0,139.5C371.9,138.5 376.6,137.8 379.7,137.0C382.8,136.2 385.0,135.0 386.6,135.0C388.2,135.0 388.1,136.6 389.5,137.0C390.9,137.4 392.1,136.7 394.7,137.5C397.3,138.3 401.5,140.3 404.9,141.9C408.3,143.5 411.8,145.2 415.2,147.0C418.6,148.8 422.3,151.0 425.5,152.9C428.7,154.8 431.4,156.5 434.3,158.7C437.2,160.9 440.4,163.5 443.1,166.1C445.8,168.7 448.2,171.3 450.4,174.1C452.6,176.9 454.8,180.2 456.3,182.9C457.9,185.6 457.9,185.7 459.7,190.0C461.5,194.3 465.3,202.9 467.3,208.7C469.3,214.5 470.5,220.3 471.6,225.0C472.7,229.7 473.5,232.8 474.1,236.7C474.8,240.6 475.3,244.6 475.5,248.5C475.7,252.4 475.5,256.3 475.1,260.2C474.7,264.1 474.0,268.6 473.3,271.9C472.6,275.2 471.6,276.7 470.7,280.0C469.8,283.3 469.0,287.8 467.7,291.7C466.4,295.6 464.6,299.9 462.6,303.5C460.7,307.1 458.3,309.9 456.0,313.0C453.7,316.1 451.1,319.2 448.7,321.8C446.2,324.4 444.2,326.3 441.3,328.4C438.4,330.5 434.8,332.4 431.1,334.3C427.4,336.2 423.1,338.1 419.2,339.5C415.3,340.9 411.4,342.0 407.5,342.8C403.6,343.6 399.9,344.2 395.7,344.3C391.5,344.4 386.4,343.8 382.5,343.1C378.6,342.4 375.7,341.1 372.3,339.9C368.9,338.7 365.2,336.8 362.0,336.1C358.8,335.4 355.9,335.4 353.2,335.5C350.5,335.6 348.1,337.1 345.9,337.0C343.7,336.9 341.4,335.6 340.0,335.1C338.6,334.6 339.4,335.3 337.2,334.0C335.0,332.7 330.2,330.0 326.9,327.4C323.6,324.8 320.2,321.7 317.4,318.6C314.6,315.6 312.3,312.4 310.1,309.1C307.9,305.8 306.0,302.5 304.2,298.8C302.4,295.1 300.6,290.8 299.3,286.9C298.0,283.0 297.0,279.1 296.1,275.2C295.2,271.3 294.6,267.4 294.2,263.5C293.8,259.6 293.5,254.8 293.5,251.7C293.5,248.6 293.9,248.3 294.2,245.0Z" fill="none" stroke="#c89468" stroke-width="9" opacity="0.55" filter="url(#b2)"/></g><rect x="285" y="130" width="200" height="228" filter="url(#nz)" opacity="0.36"/>
</g><path d="M132.3,167.6L137.4,170.0L141.8,175.2L139.6,179.6L144.0,184.0L146.2,188.4L144.0,194.3L141.0,196.5L143.3,200.3L138.9,204.7L143.3,209.0L144.7,216.4L142.5,221.5L135.2,224.0L135.9,219.3L131.5,215.7L130.0,209.0L127.1,207.6L122.0,212.7L112.5,212.7L109.5,209.1L113.9,203.2L111.0,196.6L114.7,195.7L117.6,189.9L116.9,184.0L122.0,182.5L123.5,176.7L124.2,170.8Z" fill="#4c100b" stroke="none"/><path d="M191.6,165.7L205.6,175.2L206.3,191.3L208.5,197.2L204.8,204.7L205.6,219.3L210.0,223.7L205.6,234.0L204.8,240.0L200.4,254.7L198.2,267.9L193.0,279.6L189.4,288.4L185.0,289.9L180.6,295.7L174.7,297.2L177.7,269.3L181.3,240.0L183.6,219.3L187.5,190.0L189.4,169.3Z" fill="#400e0a" stroke="none"/><path d="M327.9,204.5C330.1,203.6 331.5,204.0 332.5,204.3C333.5,204.6 333.3,206.3 333.7,206.3C334.1,206.3 333.3,204.8 335.0,204.3C336.7,203.8 340.6,203.2 344.0,203.5C347.4,203.8 352.5,204.7 355.7,206.0C358.9,207.3 361.1,208.8 363.0,211.1C364.9,213.4 366.5,217.0 367.4,219.9C368.3,222.8 368.7,225.8 368.2,228.7C367.7,231.6 366.1,234.6 364.5,237.5C362.9,240.4 361.1,243.9 358.7,245.9C356.3,247.9 352.3,248.4 349.9,249.5C347.4,250.6 345.2,251.5 344.0,252.5C342.8,253.5 344.2,255.0 342.5,255.4C340.8,255.8 336.3,255.1 333.7,254.7C331.1,254.3 328.9,253.1 327.1,253.2C325.3,253.3 324.9,256.4 322.7,255.4C320.5,254.4 315.8,249.9 313.9,247.3C311.9,244.7 311.3,242.4 311.0,240.0C310.7,237.6 312.0,235.1 312.0,233.0C312.0,230.9 310.7,230.0 311.0,227.3C311.3,224.6 312.5,219.9 313.9,217.0C315.2,214.1 316.8,211.8 319.1,209.7C321.4,207.6 325.7,205.4 327.9,204.5Z" fill="#50130e" stroke="none"/><path d="M391.7,225.3L409.3,224.1L426.9,223.1L428.4,226.7L435.0,226.7L436.5,221.6L439.4,220.9L440.1,229.7L442.3,233.3L448.9,229.7L451.1,231.1L446.7,235.5L452.6,238.5L455.1,242.1L452.6,248.0L446.0,250.5L441.6,246.5L438.7,246.5L440.9,256.1L443.1,260.9L440.9,269.7L445.2,273.3L446.7,277.7L443.1,282.1L436.5,284.3L430.6,281.4L432.8,278.5L432.1,274.1L426.9,274.1L424.0,276.3L415.2,274.1L404.9,271.9L396.1,268.9L389.5,272.6L385.9,265.3L388.1,254.6L386.6,242.9L388.1,234.1Z" fill="#5a1711" stroke="none"/><path d="M192,172 L203,180 L204,235 L196,268 L186,288 L180,290 L184,240 L190,190Z" fill="#2c0806" opacity="0.6" filter="url(#b1)"/><path d="M182,246 L176.5,294 L181,292 L187,270 L190,248Z" fill="#7a2219" opacity="0.75" filter="url(#b1)"/>
<path d="M392,229 H430.5 V265.5 H392Z" fill="#1c0504" opacity="0.97" filter="url(#b1)"/><path d="M433,250 L440,248 L441,262 L438,272 L433,272Z" fill="#3a0e0a" opacity="0.6" filter="url(#b1)"/>
<ellipse cx="336" cy="231" rx="19" ry="17" fill="#440e0a" opacity="0.7" filter="url(#b2)"/><ellipse cx="127.8" cy="175.5" rx="1.5" ry="3.2" fill="#7a4a30" transform="rotate(5 127.8 175.5)" opacity="0.9" filter="url(#b05)"/><ellipse cx="132.2" cy="182" rx="2.2" ry="3.6" fill="#1c0806" transform="rotate(15 132.2 182)" opacity="0.9" filter="url(#b05)"/><ellipse cx="136.8" cy="185.5" rx="1.8" ry="3" fill="#b08a70" transform="rotate(30 136.8 185.5)" opacity="0.9" filter="url(#b05)"/><ellipse cx="122.8" cy="189" rx="2.4" ry="3.4" fill="#200a08" transform="rotate(-30 122.8 189)" opacity="0.9" filter="url(#b05)"/><ellipse cx="142.6" cy="165" rx="1.7" ry="3.2" fill="#1a0806" transform="rotate(-35 142.6 165)" opacity="0.9" filter="url(#b05)"/><ellipse cx="120" cy="198.5" rx="3.2" ry="1.1" fill="#1c0806" transform="rotate(-5 120 198.5)" opacity="0.9" filter="url(#b05)"/><ellipse cx="135.5" cy="208.5" rx="3.4" ry="1.3" fill="#1c0806" transform="rotate(8 135.5 208.5)" opacity="0.9" filter="url(#b05)"/><ellipse cx="139.5" cy="217" rx="3.4" ry="1.5" fill="#1c0806" transform="rotate(-5 139.5 217)" opacity="0.9" filter="url(#b05)"/><ellipse cx="138.2" cy="229.5" rx="2.8" ry="1.6" fill="#1c0806" transform="rotate(-15 138.2 229.5)" opacity="0.9" filter="url(#b05)"/><ellipse cx="136.8" cy="245.6" rx="3.6" ry="2" fill="#160605" transform="rotate(-8 136.8 245.6)" opacity="0.9" filter="url(#b05)"/><ellipse cx="144.8" cy="253.8" rx="2.6" ry="1" fill="#200a08" transform="rotate(-10 144.8 253.8)" opacity="0.9" filter="url(#b05)"/><ellipse cx="143.3" cy="261.9" rx="2.8" ry="1" fill="#200a08" transform="rotate(-15 143.3 261.9)" opacity="0.9" filter="url(#b05)"/><ellipse cx="146.3" cy="272.1" rx="2.6" ry="0.9" fill="#2a0c0a" transform="rotate(-20 146.3 272.1)" opacity="0.9" filter="url(#b05)"/><ellipse cx="145.2" cy="290.8" rx="2.4" ry="3.8" fill="#1a0806" transform="rotate(-22 145.2 290.8)" opacity="0.9" filter="url(#b05)"/><ellipse cx="151.4" cy="297.8" rx="1.2" ry="1.6" fill="#2a0e0a" transform="rotate(-20 151.4 297.8)" opacity="0.9" filter="url(#b05)"/><ellipse cx="139.6" cy="305.1" rx="1.2" ry="2" fill="#3a120e" transform="rotate(-25 139.6 305.1)" opacity="0.9" filter="url(#b05)"/><ellipse cx="147.3" cy="315.4" rx="1.2" ry="2" fill="#3a120e" transform="rotate(-25 147.3 315.4)" opacity="0.9" filter="url(#b05)"/><ellipse cx="425.8" cy="197.5" rx="4.4" ry="1.7" fill="#140605" transform="rotate(-20 425.8 197.5)" opacity="0.9" filter="url(#b05)"/><ellipse cx="440.6" cy="207" rx="4" ry="1.5" fill="#140605" transform="rotate(-8 440.6 207)" opacity="0.9" filter="url(#b05)"/><ellipse cx="444" cy="238.6" rx="3.8" ry="1.5" fill="#160605" transform="rotate(-5 444 238.6)" opacity="0.9" filter="url(#b05)"/><ellipse cx="447.6" cy="246" rx="4.2" ry="2" fill="#140605" transform="rotate(-12 447.6 246)" opacity="0.9" filter="url(#b05)"/><ellipse cx="440.6" cy="279" rx="3.2" ry="2.4" fill="#140605" transform="rotate(-35 440.6 279)" opacity="0.9" filter="url(#b05)"/><ellipse cx="409" cy="254.5" rx="3.2" ry="1.7" fill="#100403" transform="rotate(-20 409 254.5)" opacity="0.9" filter="url(#b05)"/><ellipse cx="418" cy="261.5" rx="3.6" ry="1.9" fill="#100403" transform="rotate(-10 418 261.5)" opacity="0.9" filter="url(#b05)"/><ellipse cx="402" cy="253" rx="2.6" ry="3.2" fill="#120403" transform="rotate(0 402 253)" opacity="0.9" filter="url(#b05)"/><ellipse cx="437" cy="269.5" rx="1.2" ry="1.6" fill="#200806" transform="rotate(0 437 269.5)" opacity="0.9" filter="url(#b05)"/><path d="M259,226.3 L275.5,223.6 L275.5,227.6Z" fill="#160a08"/><path d="M90.6,245.0C90.6,241.7 91.0,240.2 91.4,236.9C91.8,233.6 92.4,229.1 92.9,225.2C93.5,221.3 94.2,217.4 94.7,213.5C95.2,209.6 95.5,205.6 96.2,201.7C96.9,197.8 98.0,193.1 99.0,190.0C100.0,186.9 101.0,185.9 102.5,183.0C104.0,180.1 106.0,175.8 108.0,172.5C110.0,169.2 112.1,165.8 114.6,163.0C117.1,160.2 120.7,158.0 123.2,156.0C125.7,154.0 127.2,152.6 129.4,150.8C131.6,149.1 134.1,147.1 136.4,145.5C138.8,143.9 141.3,142.3 143.5,141.1C145.7,139.8 148.0,138.9 149.6,138.0C151.2,137.1 152.3,136.6 153.1,135.8C153.9,135.0 153.5,133.9 154.5,133.2C155.5,132.5 157.6,131.8 159.3,131.4C161.0,131.0 162.6,130.8 164.6,130.6C166.6,130.4 169.7,130.4 171.6,130.4C173.5,130.4 174.3,130.6 176.0,130.7C177.7,130.8 179.2,130.4 181.6,130.8C184.0,131.2 188.2,132.2 190.4,132.9C192.6,133.6 192.8,134.2 195.0,135.1C197.2,136.0 200.6,137.0 203.8,138.5C207.0,140.0 210.7,141.9 214.1,143.9C217.5,145.9 221.1,148.2 224.3,150.5C227.5,152.8 230.2,155.0 233.1,157.6C236.0,160.2 239.2,163.1 241.9,165.9C244.6,168.8 247.1,171.8 249.3,174.7C251.5,177.6 253.6,180.9 255.1,183.5C256.6,186.1 257.2,187.2 258.4,190.0C259.6,192.8 261.0,196.3 262.3,200.0C263.6,203.7 265.0,207.8 266.0,212.0C267.0,216.2 267.6,221.4 268.4,225.0C269.2,228.6 270.1,230.1 270.7,233.4C271.3,236.7 272.0,241.1 272.2,245.0C272.4,248.9 272.1,252.8 271.9,256.7C271.6,260.6 271.3,264.6 270.7,268.5C270.1,272.4 269.2,276.3 268.2,280.2C267.2,284.1 265.5,288.6 264.5,291.9C263.5,295.2 263.1,297.2 262.0,300.0C260.9,302.8 259.4,305.9 257.6,308.8C255.8,311.7 253.3,314.9 251.0,317.6C248.7,320.3 246.4,322.6 243.7,324.9C241.0,327.2 237.1,330.3 234.9,331.5C232.7,332.7 232.7,331.9 230.5,332.0C228.3,332.1 224.6,331.7 221.7,332.0C218.8,332.3 215.8,332.6 212.9,333.7C210.0,334.8 207.0,337.0 204.1,338.4C201.2,339.8 198.5,340.9 195.3,341.8C192.1,342.7 187.5,343.6 185.0,344.0C182.5,344.4 183.3,344.4 180.3,344.3C177.3,344.2 171.5,344.2 167.1,343.7C162.7,343.2 158.1,342.4 153.9,341.1C149.8,339.8 146.1,338.0 142.2,335.9C138.3,333.8 134.2,331.3 130.5,328.6C126.8,325.9 123.4,322.9 120.2,319.8C117.0,316.8 114.1,313.6 111.4,310.3C108.7,307.0 105.8,303.1 104.1,300.0C102.4,296.9 102.2,295.2 101.0,291.9C99.8,288.6 98.2,284.1 96.9,280.2C95.7,276.3 94.4,272.4 93.5,268.5C92.6,264.6 91.9,260.6 91.4,256.7C90.9,252.8 90.6,248.3 90.6,245.0Z" fill="none" stroke="#3adf3e" stroke-width="1.5"/><path d="M294.2,245.0C294.5,241.7 294.7,236.0 295.2,231.9C295.7,227.8 296.4,224.1 297.1,220.2C297.8,216.3 298.4,212.4 299.3,208.5C300.2,204.6 301.4,200.6 302.6,196.7C303.8,192.8 305.6,187.6 306.7,185.0C307.8,182.4 308.0,183.4 309.3,181.3C310.6,179.2 312.7,175.3 314.5,172.5C316.3,169.7 318.2,166.9 320.3,164.5C322.4,162.1 324.3,160.0 326.9,157.9C329.5,155.8 332.8,153.7 335.7,152.0C338.6,150.3 341.1,149.1 344.5,147.6C347.9,146.1 352.4,144.5 356.3,143.2C360.2,141.8 364.1,140.5 368.0,139.5C371.9,138.5 376.6,137.8 379.7,137.0C382.8,136.2 385.0,135.0 386.6,135.0C388.2,135.0 388.1,136.6 389.5,137.0C390.9,137.4 392.1,136.7 394.7,137.5C397.3,138.3 401.5,140.3 404.9,141.9C408.3,143.5 411.8,145.2 415.2,147.0C418.6,148.8 422.3,151.0 425.5,152.9C428.7,154.8 431.4,156.5 434.3,158.7C437.2,160.9 440.4,163.5 443.1,166.1C445.8,168.7 448.2,171.3 450.4,174.1C452.6,176.9 454.8,180.2 456.3,182.9C457.9,185.6 457.9,185.7 459.7,190.0C461.5,194.3 465.3,202.9 467.3,208.7C469.3,214.5 470.5,220.3 471.6,225.0C472.7,229.7 473.5,232.8 474.1,236.7C474.8,240.6 475.3,244.6 475.5,248.5C475.7,252.4 475.5,256.3 475.1,260.2C474.7,264.1 474.0,268.6 473.3,271.9C472.6,275.2 471.6,276.7 470.7,280.0C469.8,283.3 469.0,287.8 467.7,291.7C466.4,295.6 464.6,299.9 462.6,303.5C460.7,307.1 458.3,309.9 456.0,313.0C453.7,316.1 451.1,319.2 448.7,321.8C446.2,324.4 444.2,326.3 441.3,328.4C438.4,330.5 434.8,332.4 431.1,334.3C427.4,336.2 423.1,338.1 419.2,339.5C415.3,340.9 411.4,342.0 407.5,342.8C403.6,343.6 399.9,344.2 395.7,344.3C391.5,344.4 386.4,343.8 382.5,343.1C378.6,342.4 375.7,341.1 372.3,339.9C368.9,338.7 365.2,336.8 362.0,336.1C358.8,335.4 355.9,335.4 353.2,335.5C350.5,335.6 348.1,337.1 345.9,337.0C343.7,336.9 341.4,335.6 340.0,335.1C338.6,334.6 339.4,335.3 337.2,334.0C335.0,332.7 330.2,330.0 326.9,327.4C323.6,324.8 320.2,321.7 317.4,318.6C314.6,315.6 312.3,312.4 310.1,309.1C307.9,305.8 306.0,302.5 304.2,298.8C302.4,295.1 300.6,290.8 299.3,286.9C298.0,283.0 297.0,279.1 296.1,275.2C295.2,271.3 294.6,267.4 294.2,263.5C293.8,259.6 293.5,254.8 293.5,251.7C293.5,248.6 293.9,248.3 294.2,245.0Z" fill="none" stroke="#3adf3e" stroke-width="1.5"/><path d="M81.3,245.0C81.3,241.7 81.7,240.2 82.1,236.9C82.5,233.6 83.0,229.1 83.6,225.2C84.1,221.3 84.8,217.4 85.4,213.5C86.0,209.6 86.5,205.6 87.2,201.7C87.9,197.8 88.6,193.2 89.6,190.0C90.6,186.8 91.8,185.3 93.3,182.5C94.8,179.7 96.5,176.5 98.6,173.1C100.7,169.7 103.3,165.7 105.8,162.3C108.3,158.9 111.0,155.8 113.8,152.8C116.6,149.9 119.6,147.0 122.4,144.6C125.2,142.2 128.2,139.9 130.5,138.2C132.8,136.5 134.1,135.8 136.0,134.6C137.9,133.4 139.9,132.3 142.0,131.3C144.1,130.3 146.4,129.4 148.7,128.8C151.0,128.2 153.5,127.9 155.8,127.7C158.2,127.5 160.3,127.7 162.8,127.9C165.3,128.2 168.3,128.8 171.0,129.2C173.7,129.6 176.0,130.0 178.7,130.4C181.4,130.8 184.3,131.1 187.0,131.5C189.7,131.9 192.2,131.9 195.0,132.6C197.8,133.3 200.6,134.6 203.8,135.9C207.0,137.2 210.7,138.8 214.1,140.6C217.5,142.3 220.9,144.2 224.3,146.4C227.7,148.6 231.4,151.1 234.6,153.5C237.8,155.9 240.6,158.1 243.4,160.8C246.2,163.5 249.1,166.7 251.5,169.6C253.9,172.5 255.9,175.0 258.1,178.4C260.3,181.8 263.0,186.4 264.7,190.0C266.4,193.6 267.2,197.0 268.4,200.0C269.6,203.0 271.0,205.6 272.0,208.0C273.0,210.4 273.6,210.8 274.4,214.3C275.2,217.8 276.1,223.9 276.6,229.0C277.1,234.1 277.3,240.4 277.4,245.0C277.5,249.6 277.5,252.8 277.3,256.7C277.1,260.6 276.8,264.6 276.3,268.5C275.8,272.4 275.1,276.3 274.1,280.2C273.1,284.1 271.4,288.6 270.4,291.9C269.4,295.2 268.8,297.8 267.9,300.0C267.0,302.2 266.2,303.0 264.9,305.1C263.5,307.2 261.9,309.8 259.8,312.5C257.7,315.2 255.2,318.5 252.5,321.3C249.8,324.1 247.1,326.6 243.7,329.3C240.3,332.0 235.8,334.9 231.9,337.4C228.0,339.8 224.1,342.1 220.2,344.0C216.3,345.9 212.4,347.8 208.5,349.1C204.6,350.4 200.6,351.0 196.7,351.6C192.8,352.2 189.4,352.7 185.0,352.8C180.6,352.9 174.8,352.6 170.1,352.1C165.4,351.6 161.3,350.8 156.9,349.6C152.5,348.4 147.9,346.6 143.7,344.7C139.5,342.8 135.8,340.5 131.9,338.1C128.0,335.7 123.9,333.0 120.2,330.1C116.5,327.2 113.1,323.8 109.9,320.5C106.7,317.2 103.5,313.4 101.1,310.3C98.7,307.2 97.2,305.1 95.5,302.0C93.8,298.9 92.0,295.5 90.6,291.9C89.2,288.3 88.2,284.1 87.1,280.2C86.0,276.3 85.0,272.4 84.2,268.5C83.4,264.6 82.6,260.6 82.1,256.7C81.6,252.8 81.3,248.3 81.3,245.0Z" fill="none" stroke="#b548dc" stroke-width="1.5"/><path d="M289.8,245.0C290.0,241.7 290.1,236.0 290.5,231.9C290.9,227.8 291.4,224.1 292.0,220.2C292.6,216.3 293.3,212.4 294.2,208.5C295.1,204.6 295.9,200.6 297.1,196.7C298.3,192.8 300.3,187.6 301.5,185.0C302.7,182.4 302.8,183.4 304.2,181.3C305.6,179.2 308.0,175.3 310.1,172.5C312.2,169.7 314.4,167.1 316.7,164.5C319.0,161.9 321.3,159.4 324.0,157.1C326.7,154.8 329.6,152.4 332.8,150.5C336.0,148.6 339.7,146.9 343.1,145.4C346.5,143.9 350.1,142.8 353.3,141.7C356.5,140.6 358.7,139.7 362.1,138.8C365.5,138.0 370.0,137.2 373.9,136.6C377.8,136.0 382.6,135.4 385.6,135.1C388.6,134.8 388.7,134.6 391.7,134.5C394.7,134.4 399.8,134.0 403.5,134.5C407.2,135.0 410.3,136.3 413.7,137.5C417.1,138.7 420.6,140.2 424.0,141.9C427.4,143.6 431.1,145.6 434.3,147.7C437.5,149.8 440.2,151.9 443.1,154.3C446.0,156.8 449.2,159.6 451.9,162.4C454.6,165.2 457.0,168.3 459.2,171.2C461.4,174.1 463.4,176.9 465.1,180.0C466.8,183.1 467.3,185.2 469.2,190.0C471.1,194.8 474.7,202.9 476.7,208.7C478.7,214.5 480.3,220.3 481.4,225.0C482.5,229.7 482.8,232.8 483.3,236.7C483.8,240.6 484.2,244.6 484.3,248.5C484.4,252.4 484.2,256.3 483.9,260.2C483.6,264.1 483.1,268.3 482.4,271.9C481.7,275.5 480.8,278.7 479.8,282.0C478.8,285.3 477.9,288.1 476.5,291.7C475.1,295.3 473.3,299.8 471.4,303.5C469.4,307.2 467.2,310.3 464.8,313.7C462.4,317.1 459.5,320.8 456.7,324.0C453.9,327.2 450.7,330.1 447.9,332.8C445.1,335.5 442.2,338.3 439.9,340.0C437.6,341.7 436.9,341.4 433.9,342.8C430.9,344.2 426.0,346.8 422.1,348.3C418.2,349.8 414.3,350.8 410.4,351.6C406.5,352.4 403.1,352.8 398.7,353.1C394.3,353.4 388.6,353.6 384.0,353.4C379.4,353.2 374.9,352.6 370.8,351.9C366.7,351.2 362.8,350.1 359.1,349.0C355.4,347.9 352.0,346.7 348.8,345.3C345.6,343.9 342.2,342.2 340.0,340.9C337.8,339.6 338.4,339.6 335.7,337.7C333.0,335.8 327.7,332.5 324.0,329.6C320.3,326.7 316.8,323.3 313.7,320.1C310.6,316.9 308.1,313.8 305.7,310.5C303.3,307.2 301.0,304.2 299.1,300.3C297.2,296.4 295.4,291.1 294.2,286.9C293.0,282.7 292.7,279.1 292.0,275.2C291.3,271.3 290.6,267.4 290.2,263.5C289.8,259.6 289.5,254.8 289.4,251.7C289.3,248.6 289.6,248.3 289.8,245.0Z" fill="none" stroke="#b548dc" stroke-width="1.5"/><path d="M132.3,167.6L137.4,170.0L141.8,175.2L139.6,179.6L144.0,184.0L146.2,188.4L144.0,194.3L141.0,196.5L143.3,200.3L138.9,204.7L143.3,209.0L144.7,216.4L142.5,221.5L135.2,224.0L135.9,219.3L131.5,215.7L130.0,209.0L127.1,207.6L122.0,212.7L112.5,212.7L109.5,209.1L113.9,203.2L111.0,196.6L114.7,195.7L117.6,189.9L116.9,184.0L122.0,182.5L123.5,176.7L124.2,170.8Z" fill="none" stroke="#4596d6" stroke-width="1.3" stroke-linejoin="round"/><path d="M191.6,165.7L205.6,175.2L206.3,191.3L208.5,197.2L204.8,204.7L205.6,219.3L210.0,223.7L205.6,234.0L204.8,240.0L200.4,254.7L198.2,267.9L193.0,279.6L189.4,288.4L185.0,289.9L180.6,295.7L174.7,297.2L177.7,269.3L181.3,240.0L183.6,219.3L187.5,190.0L189.4,169.3Z" fill="none" stroke="#4596d6" stroke-width="1.3" stroke-linejoin="round"/><path d="M327.9,204.5C330.1,203.6 331.5,204.0 332.5,204.3C333.5,204.6 333.3,206.3 333.7,206.3C334.1,206.3 333.3,204.8 335.0,204.3C336.7,203.8 340.6,203.2 344.0,203.5C347.4,203.8 352.5,204.7 355.7,206.0C358.9,207.3 361.1,208.8 363.0,211.1C364.9,213.4 366.5,217.0 367.4,219.9C368.3,222.8 368.7,225.8 368.2,228.7C367.7,231.6 366.1,234.6 364.5,237.5C362.9,240.4 361.1,243.9 358.7,245.9C356.3,247.9 352.3,248.4 349.9,249.5C347.4,250.6 345.2,251.5 344.0,252.5C342.8,253.5 344.2,255.0 342.5,255.4C340.8,255.8 336.3,255.1 333.7,254.7C331.1,254.3 328.9,253.1 327.1,253.2C325.3,253.3 324.9,256.4 322.7,255.4C320.5,254.4 315.8,249.9 313.9,247.3C311.9,244.7 311.3,242.4 311.0,240.0C310.7,237.6 312.0,235.1 312.0,233.0C312.0,230.9 310.7,230.0 311.0,227.3C311.3,224.6 312.5,219.9 313.9,217.0C315.2,214.1 316.8,211.8 319.1,209.7C321.4,207.6 325.7,205.4 327.9,204.5Z" fill="none" stroke="#4596d6" stroke-width="1.3" stroke-linejoin="round"/><path d="M391.7,225.3L409.3,224.1L426.9,223.1L428.4,226.7L435.0,226.7L436.5,221.6L439.4,220.9L440.1,229.7L442.3,233.3L448.9,229.7L451.1,231.1L446.7,235.5L452.6,238.5L455.1,242.1L452.6,248.0L446.0,250.5L441.6,246.5L438.7,246.5L440.9,256.1L443.1,260.9L440.9,269.7L445.2,273.3L446.7,277.7L443.1,282.1L436.5,284.3L430.6,281.4L432.8,278.5L432.1,274.1L426.9,274.1L424.0,276.3L415.2,274.1L404.9,271.9L396.1,268.9L389.5,272.6L385.9,265.3L388.1,254.6L386.6,242.9L388.1,234.1Z" fill="none" stroke="#4596d6" stroke-width="1.3" stroke-linejoin="round"/><path d="M98.9,117.1L295.3,146.4L263.0,366.0L65.9,336.9Z" fill="none" stroke="#d8643a" stroke-width="1.25"/><path d="M281.4,142.0L475.2,128.1L491.6,346.5L297.7,360.1Z" fill="none" stroke="#d8643a" stroke-width="1.25"/><text x="183.6" y="245.6" font-size="7" font-weight="bold" fill="#f0e8e0" font-family="Liberation Sans, sans-serif">1</text><text x="387" y="247.6" font-size="7" font-weight="bold" fill="#f0e8e0" font-family="Liberation Sans, sans-serif">2</text></svg></div>
<div id="gap" class="abs"></div>
<div id="sb" class="abs"></div><div id="sbthumb" class="abs"></div>
<svg class="abs" style="left:569.6px;top:73.2px" width="5.8" height="320.2" viewBox="0 0 5.8 320.2"><path d="M1.4,4.8L2.9,3.2L4.4,4.8M1.4,316.6L2.9,318.2L4.4,316.6" fill="none" stroke="#444" stroke-width="0.7"/></svg>
<!-- thumbnail -->
<div class="abs" style="left:510.3px;top:346.6px;width:58.3px;height:39px;background:#020502;border:0.8px solid #a8a416;overflow:hidden">
<svg class="abs" style="left:0;top:0" width="58" height="38" viewBox="0 0 58 38"><g transform="translate(-1.7,-2.1)">
<ellipse cx="17.1" cy="21.2" rx="11" ry="13.2" fill="#b8ae6a"/><ellipse cx="17.1" cy="21.2" rx="9.9" ry="12.1" fill="#9c3026"/><path d="M18.6,13 L20.2,16 L19.6,22 L17.6,27 L16.6,27 L17.6,20Z" fill="#4c1412"/><path d="M11.6,15 l1.6,0.4 l0.8,3.4 l-1,1.6 l-1.8,-1.4Z" fill="#5c1a16"/>
<ellipse cx="41.8" cy="21.5" rx="11" ry="13" fill="#b8ae6a"/><ellipse cx="41.8" cy="21.5" rx="9.9" ry="11.9" fill="#a03428"/><ellipse cx="36" cy="20.4" rx="3.2" ry="3" fill="#5e1a16"/><rect x="42.4" y="19.6" width="5.6" height="5.4" fill="#4c1412"/>
</g></svg></div>
<div id="rp" class="abs"><div id="rpstrip" class="abs"></div>
<div id="rphead" class="abs"><span class="abs" style="left:2.4px;top:7.1px;font-size:5.5px;line-height:6px;font-weight:bold;color:#111;white-space:nowrap">总体结果</span><span class="abs" style="left:45.8px;top:7.2px;font-size:5.3px;line-height:6px;color:#888;white-space:nowrap">当前西瓜</span>
<div class="abs" style="left:93.2px;top:3.2px;width:51.6px;height:12.2px;background:#fff;border:0.5px solid #e4e4e4;border-radius:1.2px"><span class="abs" style="left:1.4px;top:3.2px;font-size:5.4px;line-height:6px;color:#333;white-space:nowrap">西瓜1</span><svg class="abs" style="left:43px;top:4.6px" width="5" height="3" viewBox="0 0 5 3"><path d="M0.4,0.4L2.5,2.5L4.6,0.4" fill="none" stroke="#bbb" stroke-width="0.6"/></svg></div></div>
<div id="rpblue" class="abs"><span class="c1">项目</span><span class="c2">值</span></div>
<div id="rows" class="abs">
<div class="row"><span class="c1">瓜重(g)</span><span class="c2">0</span></div>
<div class="row alt"><span class="c1">切面横径（mm）</span><span class="c2">172.97</span></div>
<div class="row"><span class="c1">切面纵径（mm）</span><span class="c2">199.47</span></div>
<div class="row alt"><span class="c1">果形指数</span><span class="c2">0.87</span></div>
<div class="row"><span class="c1">切面周长（mm）</span><span class="c2">588.20</span></div>
<div class="row alt"><span class="c1">切面面积（mm²）</span><span class="c2">27240.88</span></div>
<div class="row"><span class="c1">瓜皮厚度（mm）</span><span class="c2">4.93</span></div>
<div class="row alt"><span class="c1">瓜皮面积(mm²)</span><span class="c2">3546.41</span></div>
<div class="row"><span class="c1">瓜瓤面积（mm²）</span><span class="c2">23694.47</span></div>
<div class="row alt"><span class="c1">瓜瓤面积占比</span><span class="c2">0.87</span></div>
<div class="row"><span class="c1">瓜瓤空洞面积（mm²）</span><span class="c2">2810.79</span></div>
<div class="row alt"><span class="c1">R/G/B</span><span class="c2">119/41/28</span></div>
<div class="row"><span class="c1">备注</span><span class="c2"></span></div>
</div></div>
<div id="status" class="abs"><span style="left:6.2px">当前分析进度：分析完成</span><span style="left:68.6px">耗时：2.26秒</span><span style="left:230.4px">当前标定像素：300DPI</span><span style="left:371.2px">当前缩放比例：25%</span></div>
<div id="taskbar" class="abs"><div class="abs" style="left:208.7px;top:0;width:62.6px;height:4px;background:#4f6967"></div><div class="abs" style="left:706px;top:2.2px;width:26px;height:1.2px;background:#9aa8a8;opacity:.7"></div></div>
</div></body></html>
